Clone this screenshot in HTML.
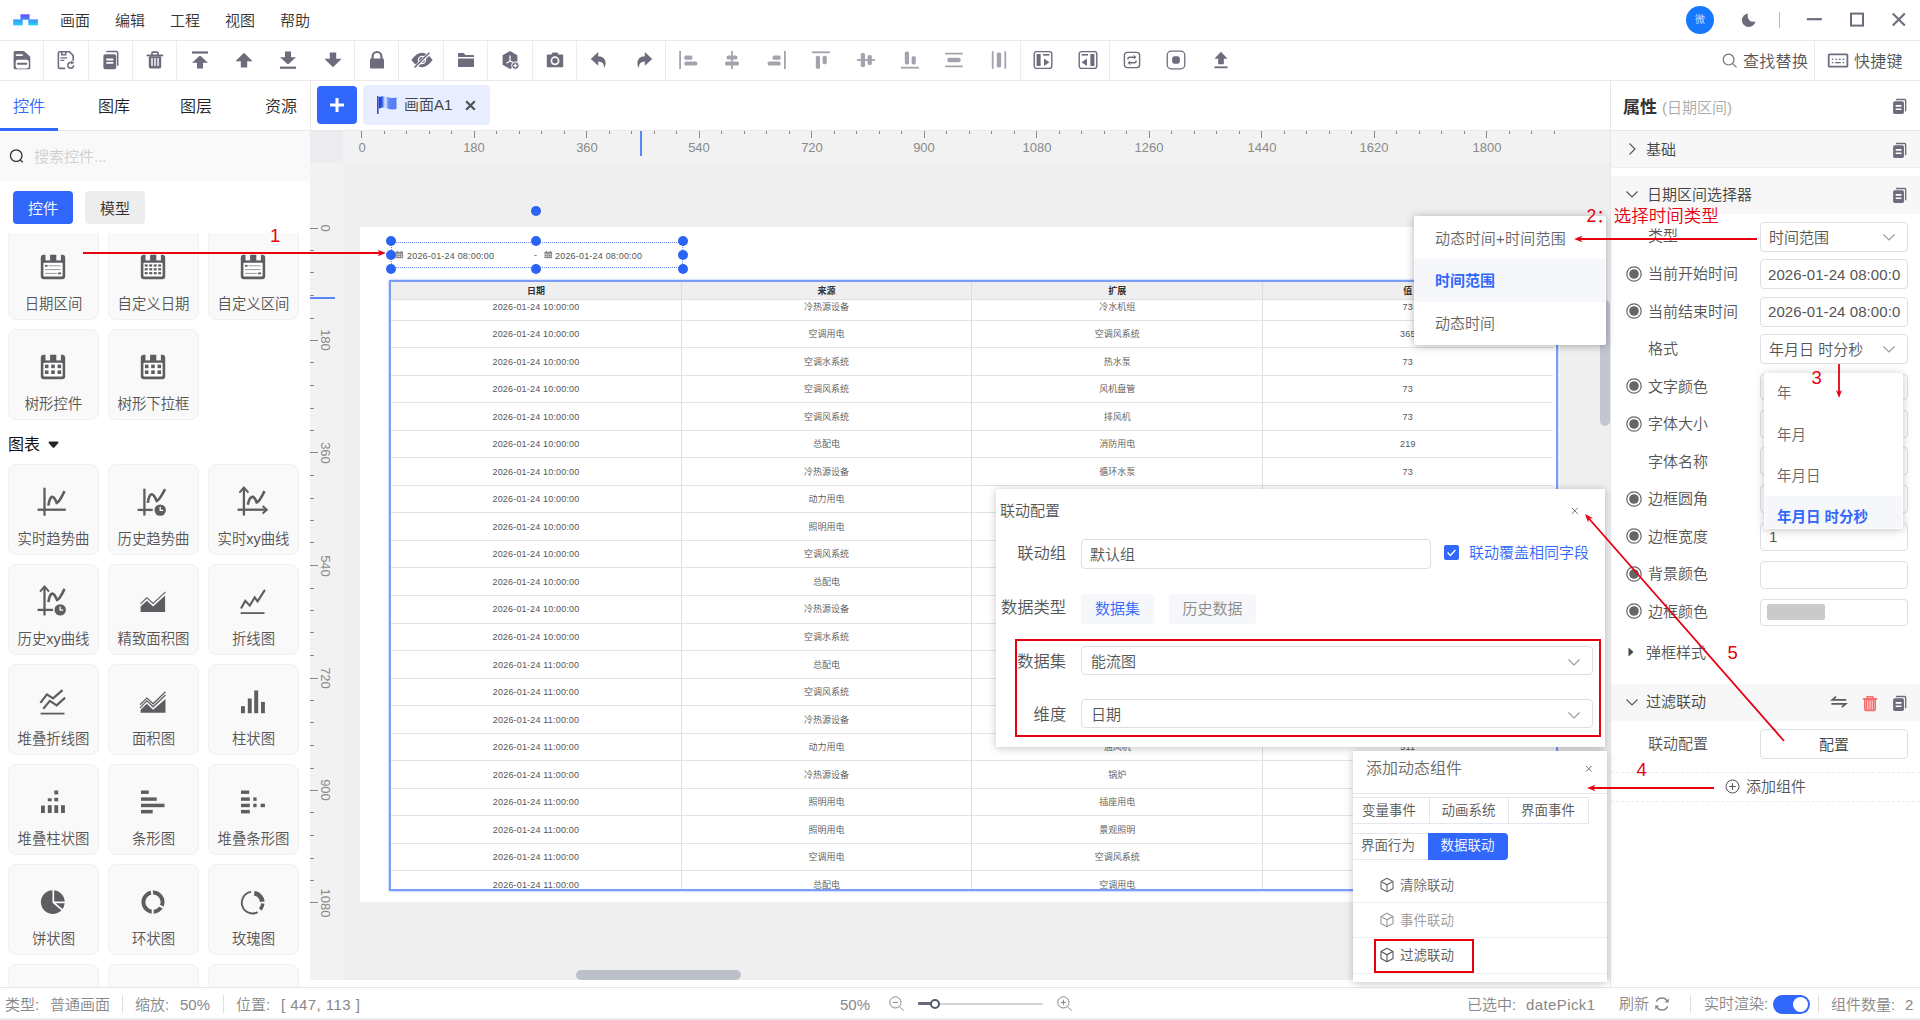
<!DOCTYPE html>
<html lang="zh-CN"><head><meta charset="utf-8"><title>组态编辑器</title>
<style>
html,body{margin:0;padding:0;}
body{width:1920px;height:1020px;overflow:hidden;background:#fff;position:relative;
font-family:"Liberation Sans","Noto Sans CJK SC",sans-serif;font-weight:350;}
div,span.t,span.v,svg{position:absolute;box-sizing:border-box;}
span.t{white-space:nowrap;display:block;}
span.v{white-space:nowrap;display:block;transform-origin:0 0;}
.clip{overflow:hidden;}
.card{background:#f9f9f9;border:1px solid #f0f0f0;border-radius:8px;}
.inp{border:1px solid #dcdfe6;border-radius:4px;background:#fff;}
.sh{box-shadow:0 1px 8px rgba(0,0,0,.24);background:#fff;}
</style></head><body>
<div style="left:0px;top:0px;width:1920px;height:41px;background:#fff;border-bottom:1px solid #e9e9e9;"></div>
<svg style="left:13px;top:14px;" width="25" height="12" viewBox="0 0 25 12"><defs><linearGradient id="lg1" x1="0" y1="0" x2="0" y2="1"><stop offset="0" stop-color="#3d8ffb"/><stop offset="1" stop-color="#22d3fb"/></linearGradient><linearGradient id="lg2" x1="0" y1="0" x2="0" y2="1"><stop offset="0" stop-color="#6a4cff"/><stop offset="1" stop-color="#3d8ffb"/></linearGradient></defs><rect x=".2" y="5.400" width="9.500" height="6" fill="url(#lg1)"/><rect x="15.300" y="5.400" width="9.600" height="6" fill="url(#lg1)"/><rect x="7.400" y=".3" width="9.200" height="5.500" fill="url(#lg2)"/></svg>
<span class="t" style="left:60px;top:9.5px;font-size:15px;line-height:21px;color:#333;">画面</span>
<span class="t" style="left:115px;top:9.5px;font-size:15px;line-height:21px;color:#333;">编辑</span>
<span class="t" style="left:170px;top:9.5px;font-size:15px;line-height:21px;color:#333;">工程</span>
<span class="t" style="left:225px;top:9.5px;font-size:15px;line-height:21px;color:#333;">视图</span>
<span class="t" style="left:280px;top:9.5px;font-size:15px;line-height:21px;color:#333;">帮助</span>
<div style="left:1686px;top:6px;width:28px;height:28px;background:#1677ff;border-radius:50%;"></div>
<span class="t" style="left:1686.0px;top:12.0px;width:28px;text-align:center;font-size:10px;line-height:16px;color:#fff;font-weight:300;">微</span>
<svg style="left:1739px;top:11px;" width="18" height="18" viewBox="0 0 18 18"><circle cx="9.700" cy="9.300" r="6.800" fill="#6c6c7c"/><circle cx="14.300" cy="5.100" r="5.700" fill="#fff"/></svg>
<div style="left:1779px;top:12px;width:1px;height:16px;background:#bbb;"></div>
<svg style="left:1805px;top:9px;" width="20" height="20" viewBox="0 0 20 20"><path d="M1.800 10.200h15" stroke="#6c6c7c" stroke-width="2.200"/></svg>
<svg style="left:1847px;top:10px;" width="20" height="20" viewBox="0 0 20 20"><rect x="4" y="3.600" width="12" height="12" fill="none" stroke="#6c6c7c" stroke-width="2"/></svg>
<svg style="left:1889px;top:10px;" width="20" height="20" viewBox="0 0 20 20"><path d="M3.800 3.500l12 12M15.800 3.500L3.800 15.500" stroke="#6c6c7c" stroke-width="2"/></svg>
<div style="left:0px;top:41px;width:1920px;height:40px;background:#fff;border-bottom:1px solid #e9e9e9;"></div>
<div style="left:43px;top:41px;width:1px;height:39px;background:#ececec;"></div>
<div style="left:88px;top:41px;width:1px;height:39px;background:#ececec;"></div>
<div style="left:132px;top:41px;width:1px;height:39px;background:#ececec;"></div>
<div style="left:176px;top:41px;width:1px;height:39px;background:#ececec;"></div>
<div style="left:354px;top:41px;width:1px;height:39px;background:#ececec;"></div>
<div style="left:398px;top:41px;width:1px;height:39px;background:#ececec;"></div>
<div style="left:443px;top:41px;width:1px;height:39px;background:#ececec;"></div>
<div style="left:487px;top:41px;width:1px;height:39px;background:#ececec;"></div>
<div style="left:532px;top:41px;width:1px;height:39px;background:#ececec;"></div>
<div style="left:576px;top:41px;width:1px;height:39px;background:#ececec;"></div>
<div style="left:665px;top:41px;width:1px;height:39px;background:#ececec;"></div>
<div style="left:1020px;top:41px;width:1px;height:39px;background:#ececec;"></div>
<div style="left:1109px;top:41px;width:1px;height:39px;background:#ececec;"></div>
<svg style="left:12.0px;top:50px;overflow:visible;" width="20" height="20" viewBox="0 0 20 20"><path d="M3.100 .9h8.800l6.400 5.800v11q0 1.500-1.500 1.500H3.100q-1.500 0-1.500-1.500V2.400q0-1.500 1.500-1.500z" fill="#6c6c7c"/><rect x="3.700" y="4.200" width="7.300" height="1.800" rx=".9" fill="#fff"/><rect x="3.700" y="9.700" width="13.100" height="8.700" rx="2.200" fill="#fff"/><rect x="4.900" y="12.700" width="10.400" height="2.100" rx="1" fill="#6c6c7c"/></svg>
<svg style="left:56.4px;top:50px;overflow:visible;" width="20" height="20" viewBox="0 0 20 20"><path d="M9.200 18.400H3.600q-1.200 0-1.200-1.200V2.900q0-1.200 1.200-1.200h9.600l4 3.800v5.300" fill="none" stroke="#6c6c7c" stroke-width="1.600" stroke-linejoin="round"/><path d="M5.700 1.700v3h4V1.700" fill="none" stroke="#6c6c7c" stroke-width="1.500"/><path d="M4.500 7.900h6.600M4.500 10.400h3.700" fill="none" stroke="#6c6c7c" stroke-width="1.300"/><circle cx="14.700" cy="15.300" r="2.900" fill="none" stroke="#6c6c7c" stroke-width="1.500" stroke-dasharray="14.500 3.700"/><path d="M15.200 10.500l3.200 2.300-3.400 1.700z" fill="#6c6c7c"/></svg>
<svg style="left:100.8px;top:50px;overflow:visible;" width="20" height="20" viewBox="0 0 20 20"><path d="M5.800 1.600h9.600q1.300 0 1.300 1.300v12.400" fill="none" stroke="#6c6c7c" stroke-width="1.500" stroke-linecap="round"/><rect x="2.400" y="4.200" width="12.800" height="15" rx="1.800" fill="#6c6c7c"/><path d="M5.300 9.500h7M5.300 12.800h7" stroke="#fff" stroke-width="1.800"/></svg>
<svg style="left:145.2px;top:50px;overflow:visible;" width="20" height="20" viewBox="0 0 20 20"><path d="M2.4 5.4h15.2M7 5V3.2q0-1 1-1h4q1 0 1 1V5" fill="none" stroke="#6c6c7c" stroke-width="1.7" stroke-linecap="round"/><path d="M3.8 6.2h12.4v10.6q0 1.6-1.6 1.6H5.4q-1.6 0-1.6-1.6z" fill="#6c6c7c"/><path d="M7 8v8M10 8v8M13 8v8" stroke="#fff" stroke-width="1.4"/></svg>
<svg style="left:189.6px;top:50px;overflow:visible;" width="20" height="20" viewBox="0 0 20 20"><rect x="2" y="1.4" width="16" height="2.2" fill="#6c6c7c"/><path d="M10 5.4l8 7.4h-5v5.8H7v-5.8H2z" fill="#6c6c7c"/></svg>
<svg style="left:234.0px;top:50px;overflow:visible;" width="20" height="20" viewBox="0 0 20 20"><path d="M10 2.8l8.6 8.4h-5.4v6.4H6.8v-6.4H1.4z" fill="#6c6c7c"/></svg>
<svg style="left:278.4px;top:50px;overflow:visible;" width="20" height="20" viewBox="0 0 20 20"><rect x="2" y="16.6" width="16" height="2.2" fill="#6c6c7c"/><path d="M10 14.6l8-7.4h-5V1.4H7v5.8H2z" fill="#6c6c7c"/></svg>
<svg style="left:322.8px;top:50px;overflow:visible;" width="20" height="20" viewBox="0 0 20 20"><path d="M10 17.2l8.6-8.4h-5.4V2.4H6.8v6.4H1.4z" fill="#6c6c7c"/></svg>
<svg style="left:367.2px;top:50px;overflow:visible;" width="20" height="20" viewBox="0 0 20 20"><path d="M5.6 9V6.4a4.4 4.4 0 0 1 8.8 0V9" fill="none" stroke="#6c6c7c" stroke-width="2.2"/><rect x="3" y="8.6" width="14" height="10" rx="1.2" fill="#6c6c7c"/></svg>
<svg style="left:411.6px;top:50px;overflow:visible;" width="20" height="20" viewBox="0 0 20 20"><path d="M-.6 10Q4.600 2.800 10 2.800T20.600 10Q15.400 17.200 10 17.200T-.6 10z" fill="#6c6c7c"/><circle cx="10" cy="10" r="3.6" fill="none" stroke="#fff" stroke-width="1.2"/><path d="M2.8 17.6L18 2.6" stroke="#fff" stroke-width="3.4"/><path d="M2.6 17.4L17.4 2.8" stroke="#6c6c7c" stroke-width="1.5"/></svg>
<svg style="left:456.0px;top:50px;overflow:visible;" width="20" height="20" viewBox="0 0 20 20"><path d="M2 3.8q0-.8.8-.8h5l1.6 2h7.800q.8 0 .8.800V7H2z" fill="#6c6c7c"/><path d="M2 8.400h16v7.800q0 .8-.8.800H2.800q-.8 0-.800-.800z" fill="#6c6c7c"/></svg>
<svg style="left:500.4px;top:50px;overflow:visible;" width="20" height="20" viewBox="0 0 20 20"><path d="M10 1l7.400 4.200v6.400a5.200 5.200 0 0 0-5 6.200L10 19l-7.400-4.200V5.200z" fill="#6c6c7c"/><path d="M10 5.600v5.400M10 11l-3.600 2.200M10 11l3 1.400" stroke="#fff" stroke-width="1.200" fill="none"/><circle cx="15.400" cy="15.600" r="3.800" fill="#6c6c7c" stroke="#fff" stroke-width="1"/><path d="M13.400 15.600h4M15.400 13.600v4" stroke="#fff" stroke-width="1.300"/></svg>
<svg style="left:544.8px;top:50px;overflow:visible;" width="20" height="20" viewBox="0 0 20 20"><path d="M6.400 4.600L7.600 2.600h4.800l1.200 2h3.600q1 0 1 1v10.600q0 1-1 1H2.800q-1 0-1-1V5.600q0-1 1-1z" fill="#6c6c7c"/><circle cx="10" cy="10.800" r="3.600" fill="none" stroke="#fff" stroke-width="1.700"/></svg>
<svg style="left:589.2px;top:50px;overflow:visible;" width="20" height="20" viewBox="0 0 20 20"><path d="M9.200 2v4.200q7.600.4 7.400 7.600-.1 2.400-1.600 4.200.6-6-5.800-6.400v4.200L1.800 9z" fill="#6c6c7c"/></svg>
<svg style="left:633.6px;top:50px;overflow:visible;" width="20" height="20" viewBox="0 0 20 20"><path d="M10.800 2v4.200q-7.600.4-7.400 7.600.1 2.400 1.600 4.200-.6-6 5.800-6.400v4.200L18.200 9z" fill="#6c6c7c"/></svg>
<svg style="left:678.0px;top:50px;overflow:visible;" width="20" height="20" viewBox="0 0 20 20"><rect x="1.2" y="1" width="1.8" height="18" rx="0" fill="#a3a3ad"/><rect x="6.4" y="5.6" width="8" height="4.2" rx="1.6" fill="#a3a3ad"/><rect x="6.4" y="11.4" width="13" height="4.2" rx="1.6" fill="#a3a3ad"/></svg>
<svg style="left:722.4px;top:50px;overflow:visible;" width="20" height="20" viewBox="0 0 20 20"><rect x="9.1" y="1" width="1.8" height="18" rx="0" fill="#a3a3ad"/><rect x="4.6" y="5.4" width="10.8" height="4.2" rx="1.6" fill="#a3a3ad"/><rect x="3" y="11.4" width="14" height="4.2" rx="1.6" fill="#a3a3ad"/></svg>
<svg style="left:766.8px;top:50px;overflow:visible;" width="20" height="20" viewBox="0 0 20 20"><rect x="17" y="1" width="1.8" height="18" rx="0" fill="#a3a3ad"/><rect x="5.6" y="5.6" width="8" height="4.2" rx="1.6" fill="#a3a3ad"/><rect x="0.6" y="11.4" width="13" height="4.2" rx="1.6" fill="#a3a3ad"/></svg>
<svg style="left:811.2px;top:50px;overflow:visible;" width="20" height="20" viewBox="0 0 20 20"><rect x="1" y="1.4" width="18" height="1.8" rx="0" fill="#a3a3ad"/><rect x="4.8" y="5.8" width="4.2" height="13" rx="1.6" fill="#a3a3ad"/><rect x="11.6" y="5.8" width="4.2" height="8.4" rx="1.6" fill="#a3a3ad"/></svg>
<svg style="left:855.6px;top:50px;overflow:visible;" width="20" height="20" viewBox="0 0 20 20"><rect x="1" y="9.1" width="18" height="1.8" rx="0" fill="#a3a3ad"/><rect x="4.8" y="3" width="4.2" height="14" rx="1.6" fill="#a3a3ad"/><rect x="11.6" y="5" width="4.2" height="10" rx="1.6" fill="#a3a3ad"/></svg>
<svg style="left:900.0px;top:50px;overflow:visible;" width="20" height="20" viewBox="0 0 20 20"><rect x="1" y="16.8" width="18" height="1.8" rx="0" fill="#a3a3ad"/><rect x="4.8" y="1.4" width="4.2" height="13" rx="1.6" fill="#a3a3ad"/><rect x="11.6" y="6.2" width="4.2" height="8.2" rx="1.6" fill="#a3a3ad"/></svg>
<svg style="left:944.4px;top:50px;overflow:visible;" width="20" height="20" viewBox="0 0 20 20"><rect x="1" y="2.8" width="18" height="1.8" rx="0.9" fill="#a3a3ad"/><rect x="1" y="15.4" width="18" height="1.8" rx="0.9" fill="#a3a3ad"/><rect x="3.4" y="7.8" width="13.2" height="4.4" rx="1.6" fill="#a3a3ad"/></svg>
<svg style="left:988.8px;top:50px;overflow:visible;" width="20" height="20" viewBox="0 0 20 20"><rect x="2.8" y="1" width="1.8" height="18" rx="0.9" fill="#a3a3ad"/><rect x="15.4" y="1" width="1.8" height="18" rx="0.9" fill="#a3a3ad"/><rect x="7.8" y="2.6" width="4.4" height="14.8" rx="1.6" fill="#a3a3ad"/></svg>
<svg style="left:1033.2px;top:50px;overflow:visible;" width="20" height="20" viewBox="0 0 20 20"><rect x="1.200" y="1.600" width="17.600" height="16.800" rx="2.400" fill="#fff" stroke="#6c6c7c" stroke-width="1.400"/><rect x="3.600" y="4" width="4" height="12" fill="#6c6c7c"/><rect x="10" y="4" width="6.400" height="1.600" fill="#6c6c7c"/><path d="M11 8.400l5.400 3.800L11 16z" fill="#6c6c7c"/></svg>
<svg style="left:1077.6px;top:50px;overflow:visible;" width="20" height="20" viewBox="0 0 20 20"><rect x="1.200" y="1.600" width="17.600" height="16.800" rx="2.400" fill="#fff" stroke="#6c6c7c" stroke-width="1.400"/><rect x="12.400" y="4" width="4" height="12" fill="#6c6c7c"/><rect x="3.600" y="4" width="6.400" height="1.600" fill="#6c6c7c"/><path d="M9 8.400L3.600 12.200 9 16z" fill="#6c6c7c"/></svg>
<svg style="left:1122.0px;top:50px;overflow:visible;" width="20" height="20" viewBox="0 0 20 20"><rect x="2.400" y="2.400" width="15.200" height="15.200" rx="2.800" fill="#fff" stroke="#6c6c7c" stroke-width="1.400"/><path d="M6 9.400V8.600q0-1.400 1.400-1.400h5.400M14 10.600v.8q0 1.400-1.400 1.400H7.200" fill="none" stroke="#6c6c7c" stroke-width="1.500"/><path d="M11.800 4.800l2.600 2.400-2.600 2.200zM8.200 10.600l-2.600 2.200 2.600 2.400z" fill="#6c6c7c"/></svg>
<svg style="left:1166.4px;top:50px;overflow:visible;" width="20" height="20" viewBox="0 0 20 20"><rect x="1.200" y="1.200" width="17.600" height="17.600" rx="4" fill="#fff" stroke="#6c6c7c" stroke-width="1.300"/><rect x="6.200" y="6.200" width="7.600" height="7.600" rx="2.200" fill="#6c6c7c"/></svg>
<svg style="left:1210.8px;top:50px;overflow:visible;" width="20" height="20" viewBox="0 0 20 20"><path d="M10 1.800l6.600 7h-3.800v5.400H7.200V8.800H3.400z" fill="#6c6c7c"/><rect x="3.400" y="16.400" width="13.200" height="1.800" fill="#6c6c7c"/></svg>
<div style="left:1814px;top:41px;width:1px;height:39px;background:#ececec;"></div>
<svg style="left:1721px;top:53px;" width="17" height="16" viewBox="0 0 17 16"><circle cx="7.600" cy="6.600" r="5.400" fill="none" stroke="#707070" stroke-width="1.200"/><path d="M11.600 10.600l4 3.800" stroke="#707070" stroke-width="1.200"/></svg>
<span class="t" style="left:1743px;top:50.6px;font-size:16px;line-height:22px;color:#555;letter-spacing:.3px;">查找替换</span>
<svg style="left:1827px;top:53px;" width="22" height="16" viewBox="0 0 22 16"><rect x="1.700" y="1.300" width="18.700" height="12.400" rx=".8" fill="none" stroke="#6c6c7c" stroke-width="1.800"/><path d="M4.800 6.400h1.600M8.400 6.400h1.600M12 6.400h1.600M15.600 6.400h1.600M4.800 9.600h1.600M15.600 9.600h1.600M8.200 9.600h5.600" stroke="#6c6c7c" stroke-width="1.400"/></svg>
<span class="t" style="left:1854px;top:50.6px;font-size:16px;line-height:22px;color:#555;letter-spacing:.2px;">快捷键</span>
<div style="left:0px;top:81px;width:311px;height:907px;background:#fff;border-right:1px solid #e9e9e9;"></div>
<div style="left:0px;top:130px;width:310px;height:1px;background:#e9e9e9;"></div>
<span class="t" style="left:13px;top:96.0px;font-size:16px;line-height:22px;color:#3167fb;">控件</span>
<span class="t" style="left:98px;top:96.0px;font-size:16px;line-height:22px;color:#222;">图库</span>
<span class="t" style="left:180px;top:96.0px;font-size:16px;line-height:22px;color:#222;">图层</span>
<span class="t" style="left:265px;top:96.0px;font-size:16px;line-height:22px;color:#222;">资源</span>
<div style="left:0px;top:128px;width:58px;height:3px;background:#3167fb;"></div>
<div style="left:0px;top:131px;width:310px;height:50px;background:#f9f9f9;"></div>
<svg style="left:9px;top:148px;" width="16" height="16" viewBox="0 0 16 16"><circle cx="7.200" cy="7.600" r="5.800" fill="none" stroke="#333" stroke-width="1.300"/><path d="M11.400 12l2.400 2.400" stroke="#333" stroke-width="1.300"/></svg>
<span class="t" style="left:34px;top:145.5px;font-size:15px;line-height:21px;color:#cfcfcf;">搜索控件...</span>
<div style="left:13px;top:191px;width:60px;height:33px;background:#3167fb;border-radius:4px;"></div>
<span class="t" style="left:13.0px;top:197.5px;width:60px;text-align:center;font-size:15px;line-height:21px;color:#fff;">控件</span>
<div style="left:85px;top:191px;width:60px;height:33px;background:#ededed;border-radius:4px;"></div>
<span class="t" style="left:85.0px;top:197.5px;width:60px;text-align:center;font-size:15px;line-height:21px;color:#333;">模型</span>
<div class="clip" style="left:0;top:233px;width:310px;height:754px;">
<div class="card" style="left:8.3px;top:-3.7px;width:90.4px;height:90.4px;"></div>
<svg style="left:38.2px;top:18.9px;overflow:visible;" width="30" height="30" viewBox="0 0 30 30"><rect x="2.800" y="2.800" width="24.400" height="24.400" rx="3" fill="#5e5e62"/><rect x="5.400" y="10.800" width="19.200" height="13.800" rx="1" fill="#fff"/><rect x="7.500" y="2" width="4.600" height="6.400" fill="#f9f9f9"/><rect x="18.300" y="2" width="4.600" height="6.400" fill="#f9f9f9"/><rect x="7" y="12.900" width="2.600" height="1.800" fill="#5e5e62"/><rect x="10.600" y="13.300" width="12" height="1" fill="#999"/><rect x="7" y="17.100" width="15.600" height="1" fill="#999"/><rect x="7" y="20.900" width="12" height="1" fill="#999"/><rect x="20" y="20.500" width="3" height="1.800" fill="#5e5e62"/></svg>
<span class="t" style="left:8.0px;top:60.8px;width:91px;text-align:center;font-size:14.4px;line-height:20.4px;color:#555;">日期区间</span>
<div class="card" style="left:108.3px;top:-3.7px;width:90.4px;height:90.4px;"></div>
<svg style="left:138.2px;top:18.9px;overflow:visible;" width="30" height="30" viewBox="0 0 30 30"><rect x="2.800" y="2.800" width="24.400" height="24.400" rx="3" fill="#5e5e62"/><rect x="5.400" y="10.800" width="19.200" height="13.800" rx="1" fill="#fff"/><rect x="7.500" y="2" width="4.600" height="6.400" fill="#f9f9f9"/><rect x="18.300" y="2" width="4.600" height="6.400" fill="#f9f9f9"/><rect x="6.7" y="12.4" width="3" height="2.200" fill="#5e5e62"/><rect x="11.2" y="12.4" width="3" height="2.200" fill="#5e5e62"/><rect x="15.7" y="12.4" width="3" height="2.200" fill="#5e5e62"/><rect x="20.2" y="12.4" width="3" height="2.200" fill="#5e5e62"/><rect x="6.7" y="16.2" width="3" height="2.200" fill="#5e5e62"/><rect x="11.2" y="16.2" width="3" height="2.200" fill="#5e5e62"/><rect x="15.7" y="16.2" width="3" height="2.200" fill="#5e5e62"/><rect x="20.2" y="16.2" width="3" height="2.200" fill="#5e5e62"/><rect x="6.7" y="20.1" width="3" height="2.200" fill="#5e5e62"/><rect x="11.2" y="20.1" width="3" height="2.200" fill="#5e5e62"/><rect x="15.7" y="20.1" width="3" height="2.200" fill="#5e5e62"/><rect x="20.2" y="20.1" width="3" height="2.200" fill="#5e5e62"/></svg>
<span class="t" style="left:108.0px;top:60.8px;width:91px;text-align:center;font-size:14.4px;line-height:20.4px;color:#555;">自定义日期</span>
<div class="card" style="left:208.3px;top:-3.7px;width:90.4px;height:90.4px;"></div>
<svg style="left:238.2px;top:18.9px;overflow:visible;" width="30" height="30" viewBox="0 0 30 30"><rect x="2.800" y="2.800" width="24.400" height="24.400" rx="3" fill="#5e5e62"/><rect x="5.400" y="10.800" width="19.200" height="13.800" rx="1" fill="#fff"/><rect x="7.500" y="2" width="4.600" height="6.400" fill="#f9f9f9"/><rect x="18.300" y="2" width="4.600" height="6.400" fill="#f9f9f9"/><rect x="7" y="12.900" width="2.600" height="1.800" fill="#5e5e62"/><rect x="10.600" y="13.300" width="12" height="1" fill="#999"/><rect x="7" y="17.100" width="15.600" height="1" fill="#999"/><rect x="7" y="20.900" width="12" height="1" fill="#999"/><rect x="20" y="20.500" width="3" height="1.800" fill="#5e5e62"/></svg>
<span class="t" style="left:208.0px;top:60.8px;width:91px;text-align:center;font-size:14.4px;line-height:20.4px;color:#555;">自定义区间</span>
<div class="card" style="left:8.3px;top:96.3px;width:90.4px;height:90.4px;"></div>
<svg style="left:38.2px;top:118.9px;overflow:visible;" width="30" height="30" viewBox="0 0 30 30"><rect x="2.800" y="2.800" width="24.400" height="24.400" rx="3" fill="#5e5e62"/><rect x="5.400" y="10.800" width="19.200" height="13.800" rx="1" fill="#fff"/><rect x="7.500" y="2" width="4.600" height="6.400" fill="#f9f9f9"/><rect x="18.300" y="2" width="4.600" height="6.400" fill="#f9f9f9"/><rect x="6.9" y="12.6" width="3.600" height="3.600" fill="#5e5e62"/><rect x="13.2" y="12.6" width="3.600" height="3.600" fill="#5e5e62"/><rect x="19.5" y="12.6" width="3.600" height="3.600" fill="#5e5e62"/><rect x="6.9" y="18.4" width="3.600" height="3.600" fill="#5e5e62"/><rect x="13.2" y="18.4" width="3.600" height="3.600" fill="#5e5e62"/><rect x="19.5" y="18.4" width="3.600" height="3.600" fill="#5e5e62"/></svg>
<span class="t" style="left:8.0px;top:160.8px;width:91px;text-align:center;font-size:14.4px;line-height:20.4px;color:#555;">树形控件</span>
<div class="card" style="left:108.3px;top:96.3px;width:90.4px;height:90.4px;"></div>
<svg style="left:138.2px;top:118.9px;overflow:visible;" width="30" height="30" viewBox="0 0 30 30"><rect x="2.800" y="2.800" width="24.400" height="24.400" rx="3" fill="#5e5e62"/><rect x="5.400" y="10.800" width="19.200" height="13.800" rx="1" fill="#fff"/><rect x="7.500" y="2" width="4.600" height="6.400" fill="#f9f9f9"/><rect x="18.300" y="2" width="4.600" height="6.400" fill="#f9f9f9"/><rect x="6.9" y="12.6" width="3.600" height="3.600" fill="#5e5e62"/><rect x="13.2" y="12.6" width="3.600" height="3.600" fill="#5e5e62"/><rect x="19.5" y="12.6" width="3.600" height="3.600" fill="#5e5e62"/><rect x="6.9" y="18.4" width="3.600" height="3.600" fill="#5e5e62"/><rect x="13.2" y="18.4" width="3.600" height="3.600" fill="#5e5e62"/><rect x="19.5" y="18.4" width="3.600" height="3.600" fill="#5e5e62"/></svg>
<span class="t" style="left:108.0px;top:160.8px;width:91px;text-align:center;font-size:14.4px;line-height:20.4px;color:#555;">树形下拉框</span>
<span class="t" style="left:8px;top:201.0px;font-size:16px;line-height:22px;color:#111;font-weight:400;">图表</span>
<svg style="left:46.5px;top:206.5px;" width="13" height="10" viewBox="0 0 13 10"><path d="M1.500 2.800q0-1.300 1.500-1.300h7q1.500 0 1.500 1.300L7.400 7.400q-.9 .9-1.800 0z" fill="#222"/></svg>
<div class="card" style="left:8.3px;top:231.3px;width:90.4px;height:90.4px;"></div>
<svg style="left:38.2px;top:253.9px;overflow:visible;" width="30" height="30" viewBox="0 0 30 30"><path d="M6.5 0.7L6.5 28.7" stroke="#5e5e62" stroke-width="2.3" fill="none" stroke-linejoin="round" stroke-linecap="butt"/><path d="M-0.4 22.7L27.8 22.7" stroke="#5e5e62" stroke-width="2.3" fill="none" stroke-linejoin="round" stroke-linecap="butt"/><path d="M10.4 18.6Q11.500000000000002 11 13.8 10T18.7 15.9Q21.2 15.4 26.5 4.1" stroke="#5e5e62" stroke-width="2.600" fill="none"/></svg>
<span class="t" style="left:8.0px;top:295.8px;width:91px;text-align:center;font-size:14.4px;line-height:20.4px;color:#555;">实时趋势曲</span>
<div class="card" style="left:108.3px;top:231.3px;width:90.4px;height:90.4px;"></div>
<svg style="left:138.2px;top:253.9px;overflow:visible;" width="30" height="30" viewBox="0 0 30 30"><path d="M6.4 1.7L6.4 28.6" stroke="#5e5e62" stroke-width="2.3" fill="none" stroke-linejoin="round" stroke-linecap="butt"/><path d="M-0.4 22.9L14.7 22.9" stroke="#5e5e62" stroke-width="2.3" fill="none" stroke-linejoin="round" stroke-linecap="butt"/><path d="M9.8 15.9Q10.9 8.4 13.2 7.4T18.7 13.9Q21.2 13.4 27.1 2.1" stroke="#5e5e62" stroke-width="2.600" fill="none"/><circle cx="22.2" cy="23.1" r="6.700" fill="#f9f9f9"/><circle cx="22.2" cy="23.1" r="5.700" fill="#5e5e62"/><path d="M22.2 19.700000000000003V23.400000000000002H25.2" stroke="#fff" stroke-width="1.300" fill="none"/></svg>
<span class="t" style="left:108.0px;top:295.8px;width:91px;text-align:center;font-size:14.4px;line-height:20.4px;color:#555;">历史趋势曲</span>
<div class="card" style="left:208.3px;top:231.3px;width:90.4px;height:90.4px;"></div>
<svg style="left:238.2px;top:253.9px;overflow:visible;" width="30" height="30" viewBox="0 0 30 30"><path d="M5.9 0.8L5.9 28.6" stroke="#5e5e62" stroke-width="2.3" fill="none" stroke-linejoin="round" stroke-linecap="butt"/><path d="M-0.4 22.7L27.8 22.7" stroke="#5e5e62" stroke-width="2.3" fill="none" stroke-linejoin="round" stroke-linecap="butt"/><path d="M1.4000000000000004 5.6L5.9 0.6l4.500 5" stroke="#5e5e62" stroke-width="2" fill="none"/><path d="M24.600 19l4.200 3.700-4.200 3.700" stroke="#5e5e62" stroke-width="2" fill="none"/><path d="M9.8 17.8Q11.200000000000001 11 13.8 10T18.7 15.5Q21.2 15.0 26.5 4.1" stroke="#5e5e62" stroke-width="2.600" fill="none"/></svg>
<span class="t" style="left:208.0px;top:295.8px;width:91px;text-align:center;font-size:14.4px;line-height:20.4px;color:#555;">实时xy曲线</span>
<div class="card" style="left:8.3px;top:331.3px;width:90.4px;height:90.4px;"></div>
<svg style="left:38.2px;top:353.9px;overflow:visible;" width="30" height="30" viewBox="0 0 30 30"><path d="M6.5 0L6.5 28.4" stroke="#5e5e62" stroke-width="2.3" fill="none" stroke-linejoin="round" stroke-linecap="butt"/><path d="M-0.4 22.9L15 22.9" stroke="#5e5e62" stroke-width="2.3" fill="none" stroke-linejoin="round" stroke-linecap="butt"/><path d="M2.0 4.6L6.5 -0.4l4.500 5" stroke="#5e5e62" stroke-width="2" fill="none"/><path d="M10.4 15.1Q11.500000000000002 7.8 13.8 6.8T19.1 13.1Q21.6 12.6 26.5 1.9" stroke="#5e5e62" stroke-width="2.600" fill="none"/><circle cx="22.2" cy="22.9" r="6.700" fill="#f9f9f9"/><circle cx="22.2" cy="22.9" r="5.700" fill="#5e5e62"/><path d="M22.2 19.5V23.2H25.2" stroke="#fff" stroke-width="1.300" fill="none"/></svg>
<span class="t" style="left:8.0px;top:395.8px;width:91px;text-align:center;font-size:14.4px;line-height:20.4px;color:#555;">历史xy曲线</span>
<div class="card" style="left:108.3px;top:331.3px;width:90.4px;height:90.4px;"></div>
<svg style="left:138.2px;top:353.9px;overflow:visible;" width="30" height="30" viewBox="0 0 30 30"><path d="M2.600 19.600L8.900 13.700 15.100 19.600 27.100 8.400V24.900H2.600z" fill="#5e5e62"/><path d="M2.4 16.8L8.9 10.8L15.1 16.4L27.5 4.9" stroke="#5e5e62" stroke-width="1.1" fill="none" /></svg>
<span class="t" style="left:108.0px;top:395.8px;width:91px;text-align:center;font-size:14.4px;line-height:20.4px;color:#555;">精致面积图</span>
<div class="card" style="left:208.3px;top:331.3px;width:90.4px;height:90.4px;"></div>
<svg style="left:238.2px;top:353.9px;overflow:visible;" width="30" height="30" viewBox="0 0 30 30"><path d="M3 21.5L7.3 13.7L11.8 18.6L16.7 10.4L19.6 14.3L26.9 2.9" stroke="#5e5e62" stroke-width="2.1" fill="none" /><path d="M2.6 26.1L26.5 26.1" stroke="#5e5e62" stroke-width="1.8" fill="none" stroke-linejoin="round" stroke-linecap="butt"/></svg>
<span class="t" style="left:208.0px;top:395.8px;width:91px;text-align:center;font-size:14.4px;line-height:20.4px;color:#555;">折线图</span>
<div class="card" style="left:8.3px;top:431.3px;width:90.4px;height:90.4px;"></div>
<svg style="left:38.2px;top:453.9px;overflow:visible;" width="30" height="30" viewBox="0 0 30 30"><path d="M2.4 15.9L8.9 7.4L15.1 11.4L24.5 3.1" stroke="#5e5e62" stroke-width="2.2" fill="none" /><path d="M5.3 21.7L11.8 13.9L18.7 18.4L27.1 10.6" stroke="#5e5e62" stroke-width="2.2" fill="none" /><path d="M2.6 26.6L26.5 26.6" stroke="#5e5e62" stroke-width="1.8" fill="none" stroke-linejoin="round" stroke-linecap="butt"/></svg>
<span class="t" style="left:8.0px;top:495.8px;width:91px;text-align:center;font-size:14.4px;line-height:20.4px;color:#555;">堆叠折线图</span>
<div class="card" style="left:108.3px;top:431.3px;width:90.4px;height:90.4px;"></div>
<svg style="left:138.2px;top:453.9px;overflow:visible;" width="30" height="30" viewBox="0 0 30 30"><path d="M2.600 25.700V22.700L8.900 16.800 15.100 22.700 27.500 11.900V25.700z" fill="#5e5e62"/><path d="M2 20.8L8.9 13.9L15.1 19.8L27.5 8" stroke="#5e5e62" stroke-width="1.2" fill="none" /><path d="M2 17.8L8.9 11L15.1 16.8L27.5 4.7" stroke="#5e5e62" stroke-width="1.2" fill="none" /></svg>
<span class="t" style="left:108.0px;top:495.8px;width:91px;text-align:center;font-size:14.4px;line-height:20.4px;color:#555;">面积图</span>
<div class="card" style="left:208.3px;top:431.3px;width:90.4px;height:90.4px;"></div>
<svg style="left:238.2px;top:453.9px;overflow:visible;" width="30" height="30" viewBox="0 0 30 30"><rect x="3" y="19.2" width="3.9" height="7" fill="#5e5e62"/><rect x="9.8" y="11.5" width="3.9" height="14.7" fill="#5e5e62"/><rect x="16.2" y="3.5" width="4" height="22.7" fill="#5e5e62"/><rect x="23" y="14.9" width="3.9" height="11.3" fill="#5e5e62"/></svg>
<span class="t" style="left:208.0px;top:495.8px;width:91px;text-align:center;font-size:14.4px;line-height:20.4px;color:#555;">柱状图</span>
<div class="card" style="left:8.3px;top:531.3px;width:90.4px;height:90.4px;"></div>
<svg style="left:38.2px;top:553.9px;overflow:visible;" width="30" height="30" viewBox="0 0 30 30"><rect x="3" y="18.6" width="3.9" height="7.4" fill="#5e5e62"/><rect x="9.8" y="18.2" width="3.9" height="7.8" fill="#5e5e62"/><rect x="9.8" y="11.3" width="3.9" height="3" fill="#5e5e62"/><rect x="16.3" y="18.2" width="3.9" height="7.8" fill="#5e5e62"/><rect x="16.3" y="10.8" width="3.9" height="3.5" fill="#5e5e62"/><rect x="16.3" y="3.5" width="3.9" height="3.9" fill="#5e5e62"/><rect x="23" y="18.2" width="3.9" height="7.8" fill="#5e5e62"/></svg>
<span class="t" style="left:8.0px;top:595.8px;width:91px;text-align:center;font-size:14.4px;line-height:20.4px;color:#555;">堆叠柱状图</span>
<div class="card" style="left:108.3px;top:531.3px;width:90.4px;height:90.4px;"></div>
<svg style="left:138.2px;top:553.9px;overflow:visible;" width="30" height="30" viewBox="0 0 30 30"><rect x="3" y="3.5" width="7.8" height="3.4" fill="#5e5e62"/><rect x="3" y="10.4" width="15.7" height="3.4" fill="#5e5e62"/><rect x="3" y="16.7" width="23.5" height="3.5" fill="#5e5e62"/><rect x="3" y="22.9" width="11.7" height="3.5" fill="#5e5e62"/></svg>
<span class="t" style="left:108.0px;top:595.8px;width:91px;text-align:center;font-size:14.4px;line-height:20.4px;color:#555;">条形图</span>
<div class="card" style="left:208.3px;top:531.3px;width:90.4px;height:90.4px;"></div>
<svg style="left:238.2px;top:553.9px;overflow:visible;" width="30" height="30" viewBox="0 0 30 30"><rect x="3" y="3.5" width="8.2" height="3.4" fill="#5e5e62"/><rect x="3" y="10.4" width="8.8" height="3.4" fill="#5e5e62"/><rect x="15.3" y="10.4" width="3.3" height="3.4" fill="#5e5e62"/><rect x="3" y="16.7" width="8.8" height="3.5" fill="#5e5e62"/><rect x="15.3" y="16.7" width="3.3" height="3.5" fill="#5e5e62"/><rect x="22.6" y="16.7" width="4.3" height="3.5" fill="#5e5e62"/><rect x="3" y="22.9" width="8.8" height="3.5" fill="#5e5e62"/></svg>
<span class="t" style="left:208.0px;top:595.8px;width:91px;text-align:center;font-size:14.4px;line-height:20.4px;color:#555;">堆叠条形图</span>
<div class="card" style="left:8.3px;top:631.3px;width:90.4px;height:90.4px;"></div>
<svg style="left:38.2px;top:653.9px;overflow:visible;" width="30" height="30" viewBox="0 0 30 30"><circle cx="14.800" cy="15.100" r="11.900" fill="#5e5e62"/><path d="M15.300 15.400V2M15.300 15.400H28M15.300 15.400L25.500 24" stroke="#f9f9f9" stroke-width="1.700" fill="none"/></svg>
<span class="t" style="left:8.0px;top:695.8px;width:91px;text-align:center;font-size:14.4px;line-height:20.4px;color:#555;">饼状图</span>
<div class="card" style="left:108.3px;top:631.3px;width:90.4px;height:90.4px;"></div>
<svg style="left:138.2px;top:653.9px;overflow:visible;" width="30" height="30" viewBox="0 0 30 30"><circle cx="15" cy="15.100" r="9.600" fill="none" stroke="#5e5e62" stroke-width="3.900"/><path d="M15 15.100L13.600 2M15 15.100L14.600 28M15 15.100L27 21.600" stroke="#f9f9f9" stroke-width="2" fill="none"/></svg>
<span class="t" style="left:108.0px;top:695.8px;width:91px;text-align:center;font-size:14.4px;line-height:20.4px;color:#555;">环状图</span>
<div class="card" style="left:208.3px;top:631.3px;width:90.4px;height:90.4px;"></div>
<svg style="left:238.2px;top:653.9px;overflow:visible;" width="30" height="30" viewBox="0 0 30 30"><path d="M19.67 25.14A10.8 10.8 0 1 1 13.10 4.91" stroke="#5e5e62" stroke-width="1.9" fill="none"/><path d="M16.28 6.05A9.7 9.7 0 0 1 24.26 14.75" stroke="#5e5e62" stroke-width="4.8" fill="none"/><path d="M24.86 16.50A10.3 10.3 0 0 1 22.25 22.49" stroke="#5e5e62" stroke-width="3.4" fill="none"/></svg>
<span class="t" style="left:208.0px;top:695.8px;width:91px;text-align:center;font-size:14.4px;line-height:20.4px;color:#555;">玫瑰图</span>
<div class="card" style="left:8px;top:731px;width:91px;height:91px;"></div>
<div class="card" style="left:108px;top:731px;width:91px;height:91px;"></div>
<div class="card" style="left:208px;top:731px;width:91px;height:91px;"></div>
</div>
<div style="left:311px;top:81px;width:1300px;height:50px;background:#fff;border-bottom:1px solid #e9e9e9;"></div>
<div style="left:317px;top:86px;width:40px;height:38px;background:#3167fb;border-radius:4px;"></div>
<svg style="left:327px;top:95px;" width="20" height="20" viewBox="0 0 20 20"><path d="M10 3v14M3 10h14" stroke="#fff" stroke-width="3"/></svg>
<div style="left:363px;top:85px;width:127px;height:40px;background:#e8eeff;border-radius:4px;"></div>
<svg style="left:376px;top:95px;" width="22" height="20" viewBox="0 0 22 20"><defs><linearGradient id="fl" x1="0" y1="0" x2="1" y2="0"><stop offset="0" stop-color="#1238c8"/><stop offset=".18" stop-color="#2f5ce8"/><stop offset=".36" stop-color="#e4ebff"/><stop offset=".56" stop-color="#5f86f6"/><stop offset="1" stop-color="#4f7af4"/></linearGradient></defs><path d="M1.800 1v18" stroke="#3553c8" stroke-width="1.600"/><path d="M2.800 2.200q4-2 8.500-.2t9.200.600v11.400q-4.700 1.200-9.200-.6t-8.500.400z" fill="url(#fl)"/></svg>
<span class="t" style="left:404px;top:93.9px;font-size:15px;line-height:21px;color:#444;">画面A1</span>
<svg style="left:464px;top:99px;" width="13" height="13" viewBox="0 0 13 13"><path d="M2.200 2.200l8.600 8.600M10.800 2.200L2.200 10.800" stroke="#505050" stroke-width="2.200"/></svg>
<div style="left:310px;top:131px;width:1301px;height:849px;background:#efefef;"></div>
<div style="left:310px;top:131px;width:33px;height:32px;background:#ececf0;"></div>
<div style="left:343px;top:131px;width:1268px;height:32px;background:#f2f2f2;"></div>
<div style="left:310px;top:163px;width:33px;height:817px;background:#f2f2f2;"></div>
<div style="left:361px;top:131px;width:1px;height:7px;background:#8a8a8a;"></div>
<span class="t" style="left:332.0px;top:137.5px;width:60px;text-align:center;font-size:13px;line-height:19px;color:#8a8a8a;">0</span>
<div style="left:384px;top:131px;width:1px;height:3px;background:#8a8a8a;"></div>
<div style="left:406px;top:131px;width:1px;height:3px;background:#8a8a8a;"></div>
<div style="left:429px;top:131px;width:1px;height:3px;background:#8a8a8a;"></div>
<div style="left:451px;top:131px;width:1px;height:3px;background:#8a8a8a;"></div>
<div style="left:474px;top:131px;width:1px;height:7px;background:#8a8a8a;"></div>
<span class="t" style="left:444.0px;top:137.5px;width:60px;text-align:center;font-size:13px;line-height:19px;color:#8a8a8a;">180</span>
<div style="left:496px;top:131px;width:1px;height:3px;background:#8a8a8a;"></div>
<div style="left:519px;top:131px;width:1px;height:3px;background:#8a8a8a;"></div>
<div style="left:541px;top:131px;width:1px;height:3px;background:#8a8a8a;"></div>
<div style="left:564px;top:131px;width:1px;height:3px;background:#8a8a8a;"></div>
<div style="left:586px;top:131px;width:1px;height:7px;background:#8a8a8a;"></div>
<span class="t" style="left:557.0px;top:137.5px;width:60px;text-align:center;font-size:13px;line-height:19px;color:#8a8a8a;">360</span>
<div style="left:609px;top:131px;width:1px;height:3px;background:#8a8a8a;"></div>
<div style="left:631px;top:131px;width:1px;height:3px;background:#8a8a8a;"></div>
<div style="left:654px;top:131px;width:1px;height:3px;background:#8a8a8a;"></div>
<div style="left:676px;top:131px;width:1px;height:3px;background:#8a8a8a;"></div>
<div style="left:699px;top:131px;width:1px;height:7px;background:#8a8a8a;"></div>
<span class="t" style="left:669.0px;top:137.5px;width:60px;text-align:center;font-size:13px;line-height:19px;color:#8a8a8a;">540</span>
<div style="left:721px;top:131px;width:1px;height:3px;background:#8a8a8a;"></div>
<div style="left:744px;top:131px;width:1px;height:3px;background:#8a8a8a;"></div>
<div style="left:766px;top:131px;width:1px;height:3px;background:#8a8a8a;"></div>
<div style="left:789px;top:131px;width:1px;height:3px;background:#8a8a8a;"></div>
<div style="left:811px;top:131px;width:1px;height:7px;background:#8a8a8a;"></div>
<span class="t" style="left:782.0px;top:137.5px;width:60px;text-align:center;font-size:13px;line-height:19px;color:#8a8a8a;">720</span>
<div style="left:834px;top:131px;width:1px;height:3px;background:#8a8a8a;"></div>
<div style="left:856px;top:131px;width:1px;height:3px;background:#8a8a8a;"></div>
<div style="left:879px;top:131px;width:1px;height:3px;background:#8a8a8a;"></div>
<div style="left:901px;top:131px;width:1px;height:3px;background:#8a8a8a;"></div>
<div style="left:924px;top:131px;width:1px;height:7px;background:#8a8a8a;"></div>
<span class="t" style="left:894.0px;top:137.5px;width:60px;text-align:center;font-size:13px;line-height:19px;color:#8a8a8a;">900</span>
<div style="left:946px;top:131px;width:1px;height:3px;background:#8a8a8a;"></div>
<div style="left:969px;top:131px;width:1px;height:3px;background:#8a8a8a;"></div>
<div style="left:991px;top:131px;width:1px;height:3px;background:#8a8a8a;"></div>
<div style="left:1014px;top:131px;width:1px;height:3px;background:#8a8a8a;"></div>
<div style="left:1036px;top:131px;width:1px;height:7px;background:#8a8a8a;"></div>
<span class="t" style="left:1007.0px;top:137.5px;width:60px;text-align:center;font-size:13px;line-height:19px;color:#8a8a8a;">1080</span>
<div style="left:1059px;top:131px;width:1px;height:3px;background:#8a8a8a;"></div>
<div style="left:1081px;top:131px;width:1px;height:3px;background:#8a8a8a;"></div>
<div style="left:1104px;top:131px;width:1px;height:3px;background:#8a8a8a;"></div>
<div style="left:1126px;top:131px;width:1px;height:3px;background:#8a8a8a;"></div>
<div style="left:1149px;top:131px;width:1px;height:7px;background:#8a8a8a;"></div>
<span class="t" style="left:1119.0px;top:137.5px;width:60px;text-align:center;font-size:13px;line-height:19px;color:#8a8a8a;">1260</span>
<div style="left:1171px;top:131px;width:1px;height:3px;background:#8a8a8a;"></div>
<div style="left:1194px;top:131px;width:1px;height:3px;background:#8a8a8a;"></div>
<div style="left:1216px;top:131px;width:1px;height:3px;background:#8a8a8a;"></div>
<div style="left:1239px;top:131px;width:1px;height:3px;background:#8a8a8a;"></div>
<div style="left:1261px;top:131px;width:1px;height:7px;background:#8a8a8a;"></div>
<span class="t" style="left:1232.0px;top:137.5px;width:60px;text-align:center;font-size:13px;line-height:19px;color:#8a8a8a;">1440</span>
<div style="left:1284px;top:131px;width:1px;height:3px;background:#8a8a8a;"></div>
<div style="left:1306px;top:131px;width:1px;height:3px;background:#8a8a8a;"></div>
<div style="left:1329px;top:131px;width:1px;height:3px;background:#8a8a8a;"></div>
<div style="left:1351px;top:131px;width:1px;height:3px;background:#8a8a8a;"></div>
<div style="left:1374px;top:131px;width:1px;height:7px;background:#8a8a8a;"></div>
<span class="t" style="left:1344.0px;top:137.5px;width:60px;text-align:center;font-size:13px;line-height:19px;color:#8a8a8a;">1620</span>
<div style="left:1396px;top:131px;width:1px;height:3px;background:#8a8a8a;"></div>
<div style="left:1419px;top:131px;width:1px;height:3px;background:#8a8a8a;"></div>
<div style="left:1441px;top:131px;width:1px;height:3px;background:#8a8a8a;"></div>
<div style="left:1464px;top:131px;width:1px;height:3px;background:#8a8a8a;"></div>
<div style="left:1486px;top:131px;width:1px;height:7px;background:#8a8a8a;"></div>
<span class="t" style="left:1457.0px;top:137.5px;width:60px;text-align:center;font-size:13px;line-height:19px;color:#8a8a8a;">1800</span>
<div style="left:1509px;top:131px;width:1px;height:3px;background:#8a8a8a;"></div>
<div style="left:1531px;top:131px;width:1px;height:3px;background:#8a8a8a;"></div>
<div style="left:1554px;top:131px;width:1px;height:3px;background:#8a8a8a;"></div>
<div style="left:640px;top:131px;width:2px;height:25px;background:#5b86f7;"></div>
<div style="left:310px;top:228px;width:8px;height:1px;background:#8a8a8a;"></div>
<span class="v" style="left:333px;top:198.0px;width:60px;text-align:center;font-size:13px;line-height:16px;color:#8a8a8a;transform:rotate(90deg);">0</span>
<div style="left:310px;top:250px;width:4px;height:1px;background:#8a8a8a;"></div>
<div style="left:310px;top:272px;width:4px;height:1px;background:#8a8a8a;"></div>
<div style="left:310px;top:295px;width:4px;height:1px;background:#8a8a8a;"></div>
<div style="left:310px;top:318px;width:4px;height:1px;background:#8a8a8a;"></div>
<div style="left:310px;top:340px;width:8px;height:1px;background:#8a8a8a;"></div>
<span class="v" style="left:333px;top:310.0px;width:60px;text-align:center;font-size:13px;line-height:16px;color:#8a8a8a;transform:rotate(90deg);">180</span>
<div style="left:310px;top:362px;width:4px;height:1px;background:#8a8a8a;"></div>
<div style="left:310px;top:385px;width:4px;height:1px;background:#8a8a8a;"></div>
<div style="left:310px;top:408px;width:4px;height:1px;background:#8a8a8a;"></div>
<div style="left:310px;top:430px;width:4px;height:1px;background:#8a8a8a;"></div>
<div style="left:310px;top:452px;width:8px;height:1px;background:#8a8a8a;"></div>
<span class="v" style="left:333px;top:423.0px;width:60px;text-align:center;font-size:13px;line-height:16px;color:#8a8a8a;transform:rotate(90deg);">360</span>
<div style="left:310px;top:475px;width:4px;height:1px;background:#8a8a8a;"></div>
<div style="left:310px;top:498px;width:4px;height:1px;background:#8a8a8a;"></div>
<div style="left:310px;top:520px;width:4px;height:1px;background:#8a8a8a;"></div>
<div style="left:310px;top:542px;width:4px;height:1px;background:#8a8a8a;"></div>
<div style="left:310px;top:565px;width:8px;height:1px;background:#8a8a8a;"></div>
<span class="v" style="left:333px;top:536.0px;width:60px;text-align:center;font-size:13px;line-height:16px;color:#8a8a8a;transform:rotate(90deg);">540</span>
<div style="left:310px;top:588px;width:4px;height:1px;background:#8a8a8a;"></div>
<div style="left:310px;top:610px;width:4px;height:1px;background:#8a8a8a;"></div>
<div style="left:310px;top:632px;width:4px;height:1px;background:#8a8a8a;"></div>
<div style="left:310px;top:655px;width:4px;height:1px;background:#8a8a8a;"></div>
<div style="left:310px;top:678px;width:8px;height:1px;background:#8a8a8a;"></div>
<span class="v" style="left:333px;top:648.0px;width:60px;text-align:center;font-size:13px;line-height:16px;color:#8a8a8a;transform:rotate(90deg);">720</span>
<div style="left:310px;top:700px;width:4px;height:1px;background:#8a8a8a;"></div>
<div style="left:310px;top:722px;width:4px;height:1px;background:#8a8a8a;"></div>
<div style="left:310px;top:745px;width:4px;height:1px;background:#8a8a8a;"></div>
<div style="left:310px;top:768px;width:4px;height:1px;background:#8a8a8a;"></div>
<div style="left:310px;top:790px;width:8px;height:1px;background:#8a8a8a;"></div>
<span class="v" style="left:333px;top:760.0px;width:60px;text-align:center;font-size:13px;line-height:16px;color:#8a8a8a;transform:rotate(90deg);">900</span>
<div style="left:310px;top:812px;width:4px;height:1px;background:#8a8a8a;"></div>
<div style="left:310px;top:835px;width:4px;height:1px;background:#8a8a8a;"></div>
<div style="left:310px;top:858px;width:4px;height:1px;background:#8a8a8a;"></div>
<div style="left:310px;top:880px;width:4px;height:1px;background:#8a8a8a;"></div>
<div style="left:310px;top:902px;width:8px;height:1px;background:#8a8a8a;"></div>
<span class="v" style="left:333px;top:873.0px;width:60px;text-align:center;font-size:13px;line-height:16px;color:#8a8a8a;transform:rotate(90deg);">1080</span>
<div style="left:310px;top:297px;width:25px;height:2px;background:#5b86f7;"></div>
<div style="left:360px;top:227px;width:1200px;height:675px;background:#fff;"></div>
<div style="left:576px;top:970px;width:165px;height:10px;background:#bcc0c9;border-radius:5px;"></div>
<div style="left:1600px;top:300px;width:10px;height:126px;background:#c3c6ce;border-radius:5px;"></div>
<div style="left:391px;top:242px;width:292px;height:26px;border:1px dotted #6a8cf5;"></div>
<svg style="left:395px;top:250px;" width="9" height="9" viewBox="0 0 9 9"><rect x=".5" y="1.800" width="7.600" height="6.400" fill="#8a8a8a"/><path d="M2.300 .8v1.600M6.300 .8v1.600" stroke="#777" stroke-width="1"/><path d="M1.400 4.300h5.800M1.400 6.300h5.800" stroke="#fff" stroke-width=".9" stroke-dasharray="1.300 .9"/></svg>
<span class="t" style="left:407px;top:249.5px;font-size:9px;line-height:12px;color:#555;letter-spacing:.19px;">2026-01-24 08:00:00</span>
<span class="t" style="left:534px;top:249.0px;font-size:9px;line-height:12px;color:#555;">-</span>
<svg style="left:544px;top:250px;" width="9" height="9" viewBox="0 0 9 9"><rect x=".5" y="1.800" width="7.600" height="6.400" fill="#8a8a8a"/><path d="M2.300 .8v1.600M6.300 .8v1.600" stroke="#777" stroke-width="1"/><path d="M1.400 4.300h5.800M1.400 6.300h5.800" stroke="#fff" stroke-width=".9" stroke-dasharray="1.300 .9"/></svg>
<span class="t" style="left:555px;top:249.5px;font-size:9px;line-height:12px;color:#555;letter-spacing:.19px;">2026-01-24 08:00:00</span>
<div style="left:386px;top:236px;width:10px;height:10px;background:#2b64f5;border-radius:50%;"></div>
<div style="left:386px;top:249.7px;width:10px;height:10px;background:#2b64f5;border-radius:50%;"></div>
<div style="left:386px;top:263.5px;width:10px;height:10px;background:#2b64f5;border-radius:50%;"></div>
<div style="left:531px;top:236px;width:10px;height:10px;background:#2b64f5;border-radius:50%;"></div>
<div style="left:531px;top:263.5px;width:10px;height:10px;background:#2b64f5;border-radius:50%;"></div>
<div style="left:677.5px;top:236px;width:10px;height:10px;background:#2b64f5;border-radius:50%;"></div>
<div style="left:677.5px;top:249.7px;width:10px;height:10px;background:#2b64f5;border-radius:50%;"></div>
<div style="left:677.5px;top:263.5px;width:10px;height:10px;background:#2b64f5;border-radius:50%;"></div>
<div style="left:531px;top:206px;width:10px;height:10px;background:#2b64f5;border-radius:50%;"></div>
<div class="clip" style="left:390px;top:281px;width:1167px;height:609px;background:#fff;">
<div style="left:0px;top:39px;width:1163px;height:1px;background:#e3e3e3;"></div>
<span class="t" style="left:46.0px;top:19.7px;width:200px;text-align:center;font-size:9px;line-height:12px;color:#555;letter-spacing:.18px;">2026-01-24 10:00:00</span>
<span class="t" style="left:336.6px;top:19.7px;width:200px;text-align:center;font-size:9px;line-height:12px;color:#555;">冷热源设备</span>
<span class="t" style="left:627.2px;top:19.7px;width:200px;text-align:center;font-size:9px;line-height:12px;color:#555;">冷水机组</span>
<span class="t" style="left:917.8px;top:19.7px;width:200px;text-align:center;font-size:9px;line-height:12px;color:#555;letter-spacing:.18px;">73</span>
<div style="left:0px;top:66px;width:1163px;height:1px;background:#e3e3e3;"></div>
<span class="t" style="left:46.0px;top:47.2px;width:200px;text-align:center;font-size:9px;line-height:12px;color:#555;letter-spacing:.18px;">2026-01-24 10:00:00</span>
<span class="t" style="left:336.6px;top:47.2px;width:200px;text-align:center;font-size:9px;line-height:12px;color:#555;">空调用电</span>
<span class="t" style="left:627.2px;top:47.2px;width:200px;text-align:center;font-size:9px;line-height:12px;color:#555;">空调风系统</span>
<span class="t" style="left:917.8px;top:47.2px;width:200px;text-align:center;font-size:9px;line-height:12px;color:#555;letter-spacing:.18px;">365</span>
<div style="left:0px;top:94px;width:1163px;height:1px;background:#e3e3e3;"></div>
<span class="t" style="left:46.0px;top:74.7px;width:200px;text-align:center;font-size:9px;line-height:12px;color:#555;letter-spacing:.18px;">2026-01-24 10:00:00</span>
<span class="t" style="left:336.6px;top:74.7px;width:200px;text-align:center;font-size:9px;line-height:12px;color:#555;">空调水系统</span>
<span class="t" style="left:627.2px;top:74.7px;width:200px;text-align:center;font-size:9px;line-height:12px;color:#555;">热水泵</span>
<span class="t" style="left:917.8px;top:74.7px;width:200px;text-align:center;font-size:9px;line-height:12px;color:#555;letter-spacing:.18px;">73</span>
<div style="left:0px;top:121px;width:1163px;height:1px;background:#e3e3e3;"></div>
<span class="t" style="left:46.0px;top:102.3px;width:200px;text-align:center;font-size:9px;line-height:12px;color:#555;letter-spacing:.18px;">2026-01-24 10:00:00</span>
<span class="t" style="left:336.6px;top:102.3px;width:200px;text-align:center;font-size:9px;line-height:12px;color:#555;">空调风系统</span>
<span class="t" style="left:627.2px;top:102.3px;width:200px;text-align:center;font-size:9px;line-height:12px;color:#555;">风机盘管</span>
<span class="t" style="left:917.8px;top:102.3px;width:200px;text-align:center;font-size:9px;line-height:12px;color:#555;letter-spacing:.18px;">73</span>
<div style="left:0px;top:149px;width:1163px;height:1px;background:#e3e3e3;"></div>
<span class="t" style="left:46.0px;top:129.8px;width:200px;text-align:center;font-size:9px;line-height:12px;color:#555;letter-spacing:.18px;">2026-01-24 10:00:00</span>
<span class="t" style="left:336.6px;top:129.8px;width:200px;text-align:center;font-size:9px;line-height:12px;color:#555;">空调风系统</span>
<span class="t" style="left:627.2px;top:129.8px;width:200px;text-align:center;font-size:9px;line-height:12px;color:#555;">排风机</span>
<span class="t" style="left:917.8px;top:129.8px;width:200px;text-align:center;font-size:9px;line-height:12px;color:#555;letter-spacing:.18px;">73</span>
<div style="left:0px;top:176px;width:1163px;height:1px;background:#e3e3e3;"></div>
<span class="t" style="left:46.0px;top:157.3px;width:200px;text-align:center;font-size:9px;line-height:12px;color:#555;letter-spacing:.18px;">2026-01-24 10:00:00</span>
<span class="t" style="left:336.6px;top:157.3px;width:200px;text-align:center;font-size:9px;line-height:12px;color:#555;">总配电</span>
<span class="t" style="left:627.2px;top:157.3px;width:200px;text-align:center;font-size:9px;line-height:12px;color:#555;">消防用电</span>
<span class="t" style="left:917.8px;top:157.3px;width:200px;text-align:center;font-size:9px;line-height:12px;color:#555;letter-spacing:.18px;">219</span>
<div style="left:0px;top:204px;width:1163px;height:1px;background:#e3e3e3;"></div>
<span class="t" style="left:46.0px;top:184.8px;width:200px;text-align:center;font-size:9px;line-height:12px;color:#555;letter-spacing:.18px;">2026-01-24 10:00:00</span>
<span class="t" style="left:336.6px;top:184.8px;width:200px;text-align:center;font-size:9px;line-height:12px;color:#555;">冷热源设备</span>
<span class="t" style="left:627.2px;top:184.8px;width:200px;text-align:center;font-size:9px;line-height:12px;color:#555;">循环水泵</span>
<span class="t" style="left:917.8px;top:184.8px;width:200px;text-align:center;font-size:9px;line-height:12px;color:#555;letter-spacing:.18px;">73</span>
<div style="left:0px;top:231px;width:1163px;height:1px;background:#e3e3e3;"></div>
<span class="t" style="left:46.0px;top:212.3px;width:200px;text-align:center;font-size:9px;line-height:12px;color:#555;letter-spacing:.18px;">2026-01-24 10:00:00</span>
<span class="t" style="left:336.6px;top:212.3px;width:200px;text-align:center;font-size:9px;line-height:12px;color:#555;">动力用电</span>
<span class="t" style="left:627.2px;top:212.3px;width:200px;text-align:center;font-size:9px;line-height:12px;color:#555;">电梯</span>
<span class="t" style="left:917.8px;top:212.3px;width:200px;text-align:center;font-size:9px;line-height:12px;color:#555;letter-spacing:.18px;">73</span>
<div style="left:0px;top:259px;width:1163px;height:1px;background:#e3e3e3;"></div>
<span class="t" style="left:46.0px;top:239.9px;width:200px;text-align:center;font-size:9px;line-height:12px;color:#555;letter-spacing:.18px;">2026-01-24 10:00:00</span>
<span class="t" style="left:336.6px;top:239.9px;width:200px;text-align:center;font-size:9px;line-height:12px;color:#555;">照明用电</span>
<span class="t" style="left:627.2px;top:239.9px;width:200px;text-align:center;font-size:9px;line-height:12px;color:#555;">应急照明</span>
<span class="t" style="left:917.8px;top:239.9px;width:200px;text-align:center;font-size:9px;line-height:12px;color:#555;letter-spacing:.18px;">73</span>
<div style="left:0px;top:286px;width:1163px;height:1px;background:#e3e3e3;"></div>
<span class="t" style="left:46.0px;top:267.4px;width:200px;text-align:center;font-size:9px;line-height:12px;color:#555;letter-spacing:.18px;">2026-01-24 10:00:00</span>
<span class="t" style="left:336.6px;top:267.4px;width:200px;text-align:center;font-size:9px;line-height:12px;color:#555;">空调风系统</span>
<span class="t" style="left:627.2px;top:267.4px;width:200px;text-align:center;font-size:9px;line-height:12px;color:#555;">新风机</span>
<span class="t" style="left:917.8px;top:267.4px;width:200px;text-align:center;font-size:9px;line-height:12px;color:#555;letter-spacing:.18px;">73</span>
<div style="left:0px;top:314px;width:1163px;height:1px;background:#e3e3e3;"></div>
<span class="t" style="left:46.0px;top:294.9px;width:200px;text-align:center;font-size:9px;line-height:12px;color:#555;letter-spacing:.18px;">2026-01-24 10:00:00</span>
<span class="t" style="left:336.6px;top:294.9px;width:200px;text-align:center;font-size:9px;line-height:12px;color:#555;">总配电</span>
<span class="t" style="left:627.2px;top:294.9px;width:200px;text-align:center;font-size:9px;line-height:12px;color:#555;">动力用电</span>
<span class="t" style="left:917.8px;top:294.9px;width:200px;text-align:center;font-size:9px;line-height:12px;color:#555;letter-spacing:.18px;">365</span>
<div style="left:0px;top:342px;width:1163px;height:1px;background:#e3e3e3;"></div>
<span class="t" style="left:46.0px;top:322.4px;width:200px;text-align:center;font-size:9px;line-height:12px;color:#555;letter-spacing:.18px;">2026-01-24 10:00:00</span>
<span class="t" style="left:336.6px;top:322.4px;width:200px;text-align:center;font-size:9px;line-height:12px;color:#555;">冷热源设备</span>
<span class="t" style="left:627.2px;top:322.4px;width:200px;text-align:center;font-size:9px;line-height:12px;color:#555;">冷却塔</span>
<span class="t" style="left:917.8px;top:322.4px;width:200px;text-align:center;font-size:9px;line-height:12px;color:#555;letter-spacing:.18px;">73</span>
<div style="left:0px;top:369px;width:1163px;height:1px;background:#e3e3e3;"></div>
<span class="t" style="left:46.0px;top:349.9px;width:200px;text-align:center;font-size:9px;line-height:12px;color:#555;letter-spacing:.18px;">2026-01-24 10:00:00</span>
<span class="t" style="left:336.6px;top:349.9px;width:200px;text-align:center;font-size:9px;line-height:12px;color:#555;">空调水系统</span>
<span class="t" style="left:627.2px;top:349.9px;width:200px;text-align:center;font-size:9px;line-height:12px;color:#555;">冷冻水泵</span>
<span class="t" style="left:917.8px;top:349.9px;width:200px;text-align:center;font-size:9px;line-height:12px;color:#555;letter-spacing:.18px;">73</span>
<div style="left:0px;top:397px;width:1163px;height:1px;background:#e3e3e3;"></div>
<span class="t" style="left:46.0px;top:377.5px;width:200px;text-align:center;font-size:9px;line-height:12px;color:#555;letter-spacing:.18px;">2026-01-24 11:00:00</span>
<span class="t" style="left:336.6px;top:377.5px;width:200px;text-align:center;font-size:9px;line-height:12px;color:#555;">总配电</span>
<span class="t" style="left:627.2px;top:377.5px;width:200px;text-align:center;font-size:9px;line-height:12px;color:#555;">照明用电</span>
<span class="t" style="left:917.8px;top:377.5px;width:200px;text-align:center;font-size:9px;line-height:12px;color:#555;letter-spacing:.18px;">219</span>
<div style="left:0px;top:424px;width:1163px;height:1px;background:#e3e3e3;"></div>
<span class="t" style="left:46.0px;top:405.0px;width:200px;text-align:center;font-size:9px;line-height:12px;color:#555;letter-spacing:.18px;">2026-01-24 11:00:00</span>
<span class="t" style="left:336.6px;top:405.0px;width:200px;text-align:center;font-size:9px;line-height:12px;color:#555;">空调风系统</span>
<span class="t" style="left:627.2px;top:405.0px;width:200px;text-align:center;font-size:9px;line-height:12px;color:#555;">送风机</span>
<span class="t" style="left:917.8px;top:405.0px;width:200px;text-align:center;font-size:9px;line-height:12px;color:#555;letter-spacing:.18px;">73</span>
<div style="left:0px;top:452px;width:1163px;height:1px;background:#e3e3e3;"></div>
<span class="t" style="left:46.0px;top:432.5px;width:200px;text-align:center;font-size:9px;line-height:12px;color:#555;letter-spacing:.18px;">2026-01-24 11:00:00</span>
<span class="t" style="left:336.6px;top:432.5px;width:200px;text-align:center;font-size:9px;line-height:12px;color:#555;">冷热源设备</span>
<span class="t" style="left:627.2px;top:432.5px;width:200px;text-align:center;font-size:9px;line-height:12px;color:#555;">冷却水泵</span>
<span class="t" style="left:917.8px;top:432.5px;width:200px;text-align:center;font-size:9px;line-height:12px;color:#555;letter-spacing:.18px;">73</span>
<div style="left:0px;top:479px;width:1163px;height:1px;background:#e3e3e3;"></div>
<span class="t" style="left:46.0px;top:460.0px;width:200px;text-align:center;font-size:9px;line-height:12px;color:#555;letter-spacing:.18px;">2026-01-24 11:00:00</span>
<span class="t" style="left:336.6px;top:460.0px;width:200px;text-align:center;font-size:9px;line-height:12px;color:#555;">动力用电</span>
<span class="t" style="left:627.2px;top:460.0px;width:200px;text-align:center;font-size:9px;line-height:12px;color:#555;">通风机</span>
<span class="t" style="left:917.8px;top:460.0px;width:200px;text-align:center;font-size:9px;line-height:12px;color:#555;letter-spacing:.18px;">511</span>
<div style="left:0px;top:507px;width:1163px;height:1px;background:#e3e3e3;"></div>
<span class="t" style="left:46.0px;top:487.5px;width:200px;text-align:center;font-size:9px;line-height:12px;color:#555;letter-spacing:.18px;">2026-01-24 11:00:00</span>
<span class="t" style="left:336.6px;top:487.5px;width:200px;text-align:center;font-size:9px;line-height:12px;color:#555;">冷热源设备</span>
<span class="t" style="left:627.2px;top:487.5px;width:200px;text-align:center;font-size:9px;line-height:12px;color:#555;">锅炉</span>
<span class="t" style="left:917.8px;top:487.5px;width:200px;text-align:center;font-size:9px;line-height:12px;color:#555;letter-spacing:.18px;">73</span>
<div style="left:0px;top:534px;width:1163px;height:1px;background:#e3e3e3;"></div>
<span class="t" style="left:46.0px;top:515.1px;width:200px;text-align:center;font-size:9px;line-height:12px;color:#555;letter-spacing:.18px;">2026-01-24 11:00:00</span>
<span class="t" style="left:336.6px;top:515.1px;width:200px;text-align:center;font-size:9px;line-height:12px;color:#555;">照明用电</span>
<span class="t" style="left:627.2px;top:515.1px;width:200px;text-align:center;font-size:9px;line-height:12px;color:#555;">插座用电</span>
<span class="t" style="left:917.8px;top:515.1px;width:200px;text-align:center;font-size:9px;line-height:12px;color:#555;letter-spacing:.18px;">73</span>
<div style="left:0px;top:562px;width:1163px;height:1px;background:#e3e3e3;"></div>
<span class="t" style="left:46.0px;top:542.6px;width:200px;text-align:center;font-size:9px;line-height:12px;color:#555;letter-spacing:.18px;">2026-01-24 11:00:00</span>
<span class="t" style="left:336.6px;top:542.6px;width:200px;text-align:center;font-size:9px;line-height:12px;color:#555;">照明用电</span>
<span class="t" style="left:627.2px;top:542.6px;width:200px;text-align:center;font-size:9px;line-height:12px;color:#555;">景观照明</span>
<span class="t" style="left:917.8px;top:542.6px;width:200px;text-align:center;font-size:9px;line-height:12px;color:#555;letter-spacing:.18px;">73</span>
<div style="left:0px;top:589px;width:1163px;height:1px;background:#e3e3e3;"></div>
<span class="t" style="left:46.0px;top:570.1px;width:200px;text-align:center;font-size:9px;line-height:12px;color:#555;letter-spacing:.18px;">2026-01-24 11:00:00</span>
<span class="t" style="left:336.6px;top:570.1px;width:200px;text-align:center;font-size:9px;line-height:12px;color:#555;">空调用电</span>
<span class="t" style="left:627.2px;top:570.1px;width:200px;text-align:center;font-size:9px;line-height:12px;color:#555;">空调风系统</span>
<span class="t" style="left:917.8px;top:570.1px;width:200px;text-align:center;font-size:9px;line-height:12px;color:#555;letter-spacing:.18px;">365</span>
<div style="left:0px;top:617px;width:1163px;height:1px;background:#e3e3e3;"></div>
<span class="t" style="left:46.0px;top:597.6px;width:200px;text-align:center;font-size:9px;line-height:12px;color:#555;letter-spacing:.18px;">2026-01-24 11:00:00</span>
<span class="t" style="left:336.6px;top:597.6px;width:200px;text-align:center;font-size:9px;line-height:12px;color:#555;">总配电</span>
<span class="t" style="left:627.2px;top:597.6px;width:200px;text-align:center;font-size:9px;line-height:12px;color:#555;">空调用电</span>
<span class="t" style="left:917.8px;top:597.6px;width:200px;text-align:center;font-size:9px;line-height:12px;color:#555;letter-spacing:.18px;">365</span>
<div style="left:291px;top:0px;width:1px;height:609px;background:#dedede;"></div>
<div style="left:581px;top:0px;width:1px;height:609px;background:#dedede;"></div>
<div style="left:872px;top:0px;width:1px;height:609px;background:#dedede;"></div>
<div style="left:0px;top:0px;width:1167px;height:19px;background:#efefef;border-bottom:1px solid #e0e0e0;"></div>
<div style="left:291px;top:0px;width:1px;height:19px;background:#dedede;"></div>
<div style="left:581px;top:0px;width:1px;height:19px;background:#dedede;"></div>
<div style="left:872px;top:0px;width:1px;height:19px;background:#dedede;"></div>
<span class="t" style="left:96.0px;top:4.0px;width:100px;text-align:center;font-size:9px;line-height:12px;color:#333;font-weight:700;">日期</span>
<span class="t" style="left:386.6px;top:4.0px;width:100px;text-align:center;font-size:9px;line-height:12px;color:#333;font-weight:700;">来源</span>
<span class="t" style="left:677.2px;top:4.0px;width:100px;text-align:center;font-size:9px;line-height:12px;color:#333;font-weight:700;">扩展</span>
<span class="t" style="left:967.8px;top:4.0px;width:100px;text-align:center;font-size:9px;line-height:12px;color:#333;font-weight:700;">值</span>
</div>
<div style="left:389px;top:280px;width:1169px;height:611px;border:2px solid #7c9cf9;box-shadow:0 0 2px rgba(90,130,250,.7);"></div>
<div style="left:1610px;top:81px;width:310px;height:907px;background:#fff;border-left:1px solid #e4e7ed;"></div>
<span class="t" style="left:1623px;top:95.5px;font-size:17px;line-height:23px;color:#333;font-weight:700;">属性</span>
<span class="t" style="left:1662px;top:96.5px;font-size:15px;line-height:21px;color:#aaa;">(日期区间)</span>
<div style="left:1611px;top:130px;width:309px;height:1px;background:#e4e7ed;"></div>
<svg style="left:1890.5px;top:97.7px;" width="17" height="17" viewBox="0 0 16 16"><path d="M5.200 1.400h7.600q1 0 1 1v9.600" fill="none" stroke="#6c6c7c" stroke-width="1.300" stroke-linecap="round"/><rect x="2" y="3" width="10.200" height="12" rx="1.600" fill="#6c6c7c"/><path d="M4.400 7.400h5.400M4.400 10.600h5.400" stroke="#fff" stroke-width="1.500"/></svg>
<div style="left:1611px;top:131px;width:309px;height:37px;background:#f7f7f7;border-bottom:1px solid #ebeef5;"></div>
<svg style="left:1627px;top:142px;" width="10" height="14" viewBox="0 0 10 14"><path d="M2.500 1.500L8 7l-5.500 5.500" fill="none" stroke="#555" stroke-width="1.100"/></svg>
<span class="t" style="left:1646px;top:138.5px;font-size:15px;line-height:21px;color:#444;">基础</span>
<svg style="left:1890.5px;top:141.7px;" width="17" height="17" viewBox="0 0 16 16"><path d="M5.200 1.400h7.600q1 0 1 1v9.600" fill="none" stroke="#6c6c7c" stroke-width="1.300" stroke-linecap="round"/><rect x="2" y="3" width="10.200" height="12" rx="1.600" fill="#6c6c7c"/><path d="M4.400 7.400h5.400M4.400 10.600h5.400" stroke="#fff" stroke-width="1.500"/></svg>
<div style="left:1611px;top:176px;width:309px;height:38px;background:#f7f7f7;"></div>
<svg style="left:1625px;top:189px;" width="14" height="10" viewBox="0 0 14 10"><path d="M1.500 2.500L7.0 8l5.5-5.500" fill="none" stroke="#555" stroke-width="1.100"/></svg>
<span class="t" style="left:1647px;top:183.5px;font-size:15px;line-height:21px;color:#444;">日期区间选择器</span>
<svg style="left:1890.5px;top:186.7px;" width="17" height="17" viewBox="0 0 16 16"><path d="M5.200 1.400h7.600q1 0 1 1v9.600" fill="none" stroke="#6c6c7c" stroke-width="1.300" stroke-linecap="round"/><rect x="2" y="3" width="10.200" height="12" rx="1.600" fill="#6c6c7c"/><path d="M4.400 7.400h5.400M4.400 10.600h5.400" stroke="#fff" stroke-width="1.500"/></svg>
<span class="t" style="left:1648px;top:224.9px;font-size:15px;line-height:21px;color:#555;">类型</span>
<div class="inp" style="left:1760px;top:222px;width:148px;height:30px;"></div>
<svg style="left:1625.5px;top:265.9px;" width="16" height="16" viewBox="0 0 16 16"><circle cx="8" cy="8" r="7.200" fill="none" stroke="#666" stroke-width="1.200"/><circle cx="8" cy="8" r="4.800" fill="#666"/></svg>
<span class="t" style="left:1648px;top:263.1px;font-size:15px;line-height:21px;color:#555;">当前开始时间</span>
<div class="inp" style="left:1760px;top:259px;width:148px;height:30px;"></div>
<svg style="left:1625.5px;top:303.4px;" width="16" height="16" viewBox="0 0 16 16"><circle cx="8" cy="8" r="7.200" fill="none" stroke="#666" stroke-width="1.200"/><circle cx="8" cy="8" r="4.800" fill="#666"/></svg>
<span class="t" style="left:1648px;top:300.6px;font-size:15px;line-height:21px;color:#555;">当前结束时间</span>
<div class="inp" style="left:1760px;top:297px;width:148px;height:30px;"></div>
<span class="t" style="left:1648px;top:338.1px;font-size:15px;line-height:21px;color:#555;">格式</span>
<div class="inp" style="left:1760px;top:334px;width:148px;height:30px;"></div>
<svg style="left:1625.5px;top:378.4px;" width="16" height="16" viewBox="0 0 16 16"><circle cx="8" cy="8" r="7.200" fill="none" stroke="#666" stroke-width="1.200"/><circle cx="8" cy="8" r="4.800" fill="#666"/></svg>
<span class="t" style="left:1648px;top:375.6px;font-size:15px;line-height:21px;color:#555;">文字颜色</span>
<div class="inp" style="left:1760px;top:374px;width:148px;height:26px;"></div>
<svg style="left:1625.5px;top:415.9px;" width="16" height="16" viewBox="0 0 16 16"><circle cx="8" cy="8" r="7.200" fill="none" stroke="#666" stroke-width="1.200"/><circle cx="8" cy="8" r="4.800" fill="#666"/></svg>
<span class="t" style="left:1648px;top:413.1px;font-size:15px;line-height:21px;color:#555;">字体大小</span>
<div class="inp" style="left:1760px;top:410px;width:148px;height:28px;"></div>
<span class="t" style="left:1648px;top:450.6px;font-size:15px;line-height:21px;color:#555;">字体名称</span>
<div class="inp" style="left:1760px;top:447px;width:148px;height:28px;"></div>
<svg style="left:1625.5px;top:490.9px;" width="16" height="16" viewBox="0 0 16 16"><circle cx="8" cy="8" r="7.200" fill="none" stroke="#666" stroke-width="1.200"/><circle cx="8" cy="8" r="4.800" fill="#666"/></svg>
<span class="t" style="left:1648px;top:488.1px;font-size:15px;line-height:21px;color:#555;">边框圆角</span>
<div class="inp" style="left:1760px;top:485px;width:148px;height:28px;"></div>
<svg style="left:1625.5px;top:528.4px;" width="16" height="16" viewBox="0 0 16 16"><circle cx="8" cy="8" r="7.200" fill="none" stroke="#666" stroke-width="1.200"/><circle cx="8" cy="8" r="4.800" fill="#666"/></svg>
<span class="t" style="left:1648px;top:525.6px;font-size:15px;line-height:21px;color:#555;">边框宽度</span>
<div class="inp" style="left:1760px;top:523px;width:148px;height:28px;"></div>
<svg style="left:1625.5px;top:565.9px;" width="16" height="16" viewBox="0 0 16 16"><circle cx="8" cy="8" r="7.200" fill="none" stroke="#666" stroke-width="1.200"/><circle cx="8" cy="8" r="4.800" fill="#666"/></svg>
<span class="t" style="left:1648px;top:563.1px;font-size:15px;line-height:21px;color:#555;">背景颜色</span>
<div class="inp" style="left:1760px;top:561px;width:148px;height:28px;"></div>
<svg style="left:1625.5px;top:603.4px;" width="16" height="16" viewBox="0 0 16 16"><circle cx="8" cy="8" r="7.200" fill="none" stroke="#666" stroke-width="1.200"/><circle cx="8" cy="8" r="4.800" fill="#666"/></svg>
<span class="t" style="left:1648px;top:600.6px;font-size:15px;line-height:21px;color:#555;">边框颜色</span>
<div class="inp" style="left:1760px;top:599px;width:148px;height:27px;"></div>
<span class="t" style="left:1769px;top:226.5px;font-size:15px;line-height:21px;color:#555;">时间范围</span>
<svg style="left:1882px;top:232px;" width="14" height="10" viewBox="0 0 14 10"><path d="M1.500 2.500L7.0 8l5.5-5.500" fill="none" stroke="#999" stroke-width="1.100"/></svg>
<span class="t" style="left:1768px;top:263.5px;font-size:15px;line-height:21px;color:#555;letter-spacing:.08px;">2026-01-24 08:00:0</span>
<span class="t" style="left:1768px;top:301.0px;font-size:15px;line-height:21px;color:#555;letter-spacing:.08px;">2026-01-24 08:00:0</span>
<span class="t" style="left:1769px;top:338.5px;font-size:15px;line-height:21px;color:#555;">年月日 时分秒</span>
<svg style="left:1882px;top:344px;" width="14" height="10" viewBox="0 0 14 10"><path d="M1.500 2.500L7.0 8l5.5-5.500" fill="none" stroke="#999" stroke-width="1.100"/></svg>
<span class="t" style="left:1769px;top:526.0px;font-size:15px;line-height:21px;color:#555;">1</span>
<div style="left:1767px;top:604px;width:58px;height:16px;background:#cacaca;border-radius:2px;"></div>
<svg style="left:1627px;top:646px;" width="8" height="12" viewBox="0 0 8 12"><path d="M1.500 1.500L6.500 6 1.500 10.500z" fill="#444"/></svg>
<span class="t" style="left:1646px;top:642.0px;font-size:15px;line-height:21px;color:#555;">弹框样式</span>
<div style="left:1611px;top:684px;width:309px;height:37px;background:#f7f7f7;"></div>
<svg style="left:1625px;top:697px;" width="14" height="10" viewBox="0 0 14 10"><path d="M1.500 2.500L7.0 8l5.5-5.500" fill="none" stroke="#555" stroke-width="1.100"/></svg>
<span class="t" style="left:1646px;top:691.0px;font-size:15px;line-height:21px;color:#444;">过滤联动</span>
<svg style="left:1829px;top:693px;" width="20" height="18" viewBox="0 0 20 18"><path d="M17.200 6.900H3.400L7 3.700M2.400 10.900h14.200L12.800 14.100" fill="none" stroke="#5c5c64" stroke-width="1.800" stroke-linejoin="miter"/></svg>
<svg style="left:1861px;top:694px;" width="18" height="19" viewBox="0 0 18 19"><path d="M2.400 4.900h13.200M6.200 4.400V2.800h5.600v1.600" fill="none" stroke="#f56c6c" stroke-width="1.600" stroke-linecap="round"/><path d="M3.800 5.800h10.400v9.400q0 1.400-1.400 1.400H5.200q-1.400 0-1.400-1.400z" fill="#fbd3d3" stroke="#f56c6c" stroke-width="1.500"/><path d="M5.600 6.400v9.600M7.900 6.400v9.600M10.200 6.400v9.600M12.400 6.400v9.600" stroke="#f56c6c" stroke-width="1.200"/></svg>
<svg style="left:1890.5px;top:694.7px;" width="17" height="17" viewBox="0 0 16 16"><path d="M5.200 1.400h7.600q1 0 1 1v9.600" fill="none" stroke="#6c6c7c" stroke-width="1.300" stroke-linecap="round"/><rect x="2" y="3" width="10.200" height="12" rx="1.600" fill="#6c6c7c"/><path d="M4.400 7.400h5.400M4.400 10.600h5.400" stroke="#fff" stroke-width="1.500"/></svg>
<span class="t" style="left:1648px;top:732.8px;font-size:15px;line-height:21px;color:#555;">联动配置</span>
<div class="inp" style="left:1760px;top:729px;width:148px;height:30px;"></div>
<span class="t" style="left:1784.0px;top:734.0px;width:100px;text-align:center;font-size:15px;line-height:21px;color:#444;">配置</span>
<div style="left:1611px;top:772px;width:309px;height:30px;border-top:1px dashed #ececec;border-bottom:1px dashed #ececec;"></div>
<svg style="left:1725px;top:779px;" width="15" height="15" viewBox="0 0 15 15"><circle cx="7.500" cy="7.500" r="6.500" fill="none" stroke="#555" stroke-width="1"/><path d="M7.500 4.200v6.600M4.200 7.500h6.600" stroke="#555" stroke-width="1"/></svg>
<span class="t" style="left:1746px;top:776.0px;font-size:15px;line-height:21px;color:#555;">添加组件</span>
<div style="left:310px;top:980px;width:1301px;height:8px;background:#fff;"></div>
<div style="left:0px;top:987px;width:1920px;height:33px;background:#fff;"></div>
<div style="left:0px;top:987px;width:1920px;height:1px;background:#e4e7ed;"></div>
<div style="left:1610px;top:980px;width:1px;height:7px;background:#e4e7ed;"></div>
<div style="left:0px;top:1018px;width:1920px;height:2px;background:#ececec;"></div>
<span class="t" style="left:5px;top:994.0px;font-size:15px;line-height:21px;color:#888;">类型:</span>
<span class="t" style="left:50px;top:994.0px;font-size:15px;line-height:21px;color:#888;">普通画面</span>
<div style="left:122px;top:995px;width:1px;height:18px;background:#e0e0e0;"></div>
<span class="t" style="left:135px;top:994.0px;font-size:15px;line-height:21px;color:#888;">缩放:</span>
<span class="t" style="left:180px;top:994.0px;font-size:15px;line-height:21px;color:#888;">50%</span>
<div style="left:223px;top:995px;width:1px;height:18px;background:#e0e0e0;"></div>
<span class="t" style="left:236px;top:994.0px;font-size:15px;line-height:21px;color:#888;">位置:</span>
<span class="t" style="left:281px;top:994.0px;font-size:15px;line-height:21px;color:#888;letter-spacing:.45px;">[ 447, 113 ]</span>
<span class="t" style="left:840px;top:994.0px;font-size:15px;line-height:21px;color:#888;">50%</span>
<svg style="left:888px;top:995px;" width="18" height="18" viewBox="0 0 18 18"><circle cx="7.400" cy="7.400" r="5.600" fill="none" stroke="#888" stroke-width="1"/><path d="M11.400 11.600l4.200 4.200M4.800 7.400h5.200" stroke="#888" stroke-width="1"/></svg>
<div style="left:918px;top:1002.5px;width:125px;height:2px;background:#d4d4d4;border-radius:1px;"></div>
<div style="left:918px;top:1002px;width:14px;height:3px;background:#666a78;border-radius:1px;"></div>
<div style="left:929.5px;top:998.5px;width:10px;height:10px;background:#fff;border:2px solid #55596a;border-radius:50%;"></div>
<svg style="left:1056px;top:995px;" width="18" height="18" viewBox="0 0 18 18"><circle cx="7.400" cy="7.400" r="5.600" fill="none" stroke="#888" stroke-width="1"/><path d="M11.400 11.600l4.200 4.200M4.800 7.400h5.200M7.400 4.800v5.200" stroke="#888" stroke-width="1"/></svg>
<span class="t" style="left:1467px;top:994.0px;font-size:15px;line-height:21px;color:#888;">已选中:</span>
<span class="t" style="left:1526px;top:994.0px;font-size:15px;line-height:21px;color:#888;letter-spacing:.4px;">datePick1</span>
<span class="t" style="left:1619px;top:993.0px;font-size:15px;line-height:21px;color:#888;">刷新</span>
<svg style="left:1653px;top:995px;" width="18" height="18" viewBox="0 0 18 18"><path d="M14.600 7A6 6 0 0 0 3.400 6.600M3.400 11a6 6 0 0 0 11.200.400" fill="none" stroke="#888" stroke-width="1.500"/><path d="M15.800 3.400v4.200h-4.200zM2.200 14.600v-4.200h4.200z" fill="#888"/></svg>
<div style="left:1690px;top:995px;width:1px;height:18px;background:#e0e0e0;"></div>
<span class="t" style="left:1704px;top:993.0px;font-size:15px;line-height:21px;color:#888;">实时渲染:</span>
<div style="left:1773px;top:995px;width:37px;height:19px;background:#3167fb;border-radius:10px;"></div>
<div style="left:1792.5px;top:997px;width:15px;height:15px;background:#fff;border-radius:50%;"></div>
<div style="left:1818px;top:995px;width:1px;height:18px;background:#e0e0e0;"></div>
<span class="t" style="left:1831px;top:994.0px;font-size:15px;line-height:21px;color:#888;">组件数量:</span>
<span class="t" style="left:1905px;top:994.0px;font-size:15px;line-height:21px;color:#888;">2</span>
<div class="sh" style="left:1414px;top:216px;width:192px;height:129px;border-radius:2px;box-shadow:0 1px 9px rgba(0,0,0,.3);"></div>
<div style="left:1414px;top:259px;width:191px;height:43px;background:#f5f7fa;"></div>
<span class="t" style="left:1435px;top:228.0px;font-size:15px;line-height:21px;color:#666;letter-spacing:.25px;">动态时间+时间范围</span>
<span class="t" style="left:1435px;top:269.5px;font-size:15px;line-height:21px;color:#3167fb;font-weight:700;">时间范围</span>
<span class="t" style="left:1435px;top:313.0px;font-size:15px;line-height:21px;color:#666;">动态时间</span>
<div class="sh" style="left:1764px;top:373px;width:139px;height:155.5px;border-radius:3px;"></div>
<div style="left:1765px;top:496px;width:137px;height:32px;background:#f5f7fa;"></div>
<span class="t" style="left:1777px;top:383.25px;font-size:14.5px;line-height:20.5px;color:#666;">年</span>
<span class="t" style="left:1777px;top:424.55px;font-size:14.5px;line-height:20.5px;color:#666;">年月</span>
<span class="t" style="left:1777px;top:465.75px;font-size:14.5px;line-height:20.5px;color:#666;">年月日</span>
<span class="t" style="left:1777px;top:506.54999999999995px;font-size:14.5px;line-height:20.5px;color:#3167fb;font-weight:700;">年月日 时分秒</span>
<div class="sh" style="left:996px;top:489px;width:609px;height:258px;"></div>
<span class="t" style="left:1000px;top:500.0px;font-size:15px;line-height:21px;color:#555;">联动配置</span>
<svg style="left:1570px;top:506px;" width="10" height="10" viewBox="0 0 10 10"><path d="M1.800 1.800l6 6M7.800 1.800l-6 6" stroke="#777" stroke-width="1"/></svg>
<span class="t" style="left:1017.3px;top:542.35px;font-size:16.3px;line-height:22.3px;color:#555;">联动组</span>
<div class="inp" style="left:1081px;top:539px;width:350px;height:30px;"></div>
<span class="t" style="left:1090px;top:544.0px;font-size:15px;line-height:21px;color:#555;">默认组</span>
<div style="left:1444px;top:545px;width:15px;height:15px;background:#3167fb;border-radius:2px;"></div>
<svg style="left:1444px;top:545px;" width="15" height="15" viewBox="0 0 15 15"><path d="M3.600 7.600l2.800 2.800 5-5.400" fill="none" stroke="#fff" stroke-width="1.400"/></svg>
<span class="t" style="left:1469px;top:541.8px;font-size:15px;line-height:21px;color:#3167fb;">联动覆盖相同字段</span>
<span class="t" style="left:1001px;top:596.35px;font-size:16.3px;line-height:22.3px;color:#555;">数据类型</span>
<div style="left:1081px;top:594px;width:73px;height:30px;background:#f5f7fa;border-radius:4px;"></div>
<span class="t" style="left:1081.0px;top:598.0px;width:73px;text-align:center;font-size:15px;line-height:21px;color:#3167fb;">数据集</span>
<div style="left:1169px;top:594px;width:87px;height:30px;background:#f5f7fa;border-radius:4px;"></div>
<span class="t" style="left:1169.0px;top:598.0px;width:87px;text-align:center;font-size:15px;line-height:21px;color:#8a8a8a;">历史数据</span>
<div style="left:1015px;top:638.5px;width:586px;height:98px;border:2px solid #e60012;"></div>
<span class="t" style="left:1017.3px;top:650.35px;font-size:16.3px;line-height:22.3px;color:#555;">数据集</span>
<div class="inp" style="left:1081px;top:646.2px;width:512px;height:29.3px;"></div>
<span class="t" style="left:1091px;top:651.0px;font-size:15px;line-height:21px;color:#555;">能流图</span>
<svg style="left:1567px;top:656.5px;" width="14" height="10" viewBox="0 0 14 10"><path d="M1.500 2.500L7.0 8l5.5-5.500" fill="none" stroke="#999" stroke-width="1.100"/></svg>
<span class="t" style="left:1033.6px;top:703.35px;font-size:16.3px;line-height:22.3px;color:#555;">维度</span>
<div class="inp" style="left:1081px;top:699px;width:512px;height:29.3px;"></div>
<span class="t" style="left:1091px;top:704.0px;font-size:15px;line-height:21px;color:#555;">日期</span>
<svg style="left:1567px;top:709.5px;" width="14" height="10" viewBox="0 0 14 10"><path d="M1.500 2.500L7.0 8l5.5-5.500" fill="none" stroke="#999" stroke-width="1.100"/></svg>
<div class="sh" style="left:1353px;top:751px;width:254px;height:231px;"></div>
<span class="t" style="left:1366px;top:757.5px;font-size:16px;line-height:22px;color:#6a6a6a;">添加动态组件</span>
<svg style="left:1584px;top:763.5px;" width="10" height="10" viewBox="0 0 10 10"><path d="M2 2l5.600 5.600M7.600 2L2 7.600" stroke="#777" stroke-width="1"/></svg>
<div style="left:1353px;top:793px;width:254px;height:1px;background:#e8e8e8;"></div>
<div style="left:1353px;top:797px;width:236px;height:27px;border:1px solid #e4e7ed;border-left:none;"></div>
<div style="left:1429px;top:797px;width:1px;height:27px;background:#e4e7ed;"></div>
<div style="left:1508px;top:797px;width:1px;height:27px;background:#e4e7ed;"></div>
<span class="t" style="left:1351.0px;top:801.25px;width:76px;text-align:center;font-size:13.5px;line-height:19.5px;color:#555;">变量事件</span>
<span class="t" style="left:1429.5px;top:801.25px;width:78px;text-align:center;font-size:13.5px;line-height:19.5px;color:#555;">动画系统</span>
<span class="t" style="left:1509.0px;top:801.25px;width:78px;text-align:center;font-size:13.5px;line-height:19.5px;color:#555;">界面事件</span>
<div style="left:1353px;top:833px;width:75px;height:27px;border:1px solid #e4e7ed;border-left:none;border-right:none;"></div>
<span class="t" style="left:1350.0px;top:836.25px;width:76px;text-align:center;font-size:13.5px;line-height:19.5px;color:#555;">界面行为</span>
<div style="left:1427.5px;top:833px;width:80.5px;height:26.5px;background:#3167fb;border-radius:0 4px 4px 0;"></div>
<span class="t" style="left:1427.5px;top:836.25px;width:80px;text-align:center;font-size:13.5px;line-height:19.5px;color:#fff;">数据联动</span>
<svg style="left:1379px;top:877px;" width="16" height="16" viewBox="0 0 16 16"><path d="M8 1.200l6 3.200v7.200l-6 3.200-6-3.200V4.400z" fill="none" stroke="#666" stroke-width="1.100" stroke-linejoin="round"/><path d="M2.200 4.600L8 7.800l5.800-3.200M8 7.800v6.800" fill="none" stroke="#666" stroke-width="1.100"/></svg>
<span class="t" style="left:1400px;top:875.75px;font-size:13.5px;line-height:19.5px;color:#666;">清除联动</span>
<div style="left:1353px;top:902px;width:254px;height:1px;background:#efefef;"></div>
<svg style="left:1379px;top:912px;" width="16" height="16" viewBox="0 0 16 16"><path d="M8 1.200l6 3.200v7.200l-6 3.200-6-3.200V4.400z" fill="none" stroke="#999" stroke-width="1.100" stroke-linejoin="round"/><path d="M2.200 4.600L8 7.800l5.800-3.200M8 7.800v6.800" fill="none" stroke="#999" stroke-width="1.100"/></svg>
<span class="t" style="left:1400px;top:910.75px;font-size:13.5px;line-height:19.5px;color:#999;">事件联动</span>
<div style="left:1353px;top:937px;width:254px;height:1px;background:#efefef;"></div>
<svg style="left:1379px;top:947px;" width="16" height="16" viewBox="0 0 16 16"><path d="M8 1.200l6 3.200v7.200l-6 3.200-6-3.200V4.400z" fill="none" stroke="#555" stroke-width="1.100" stroke-linejoin="round"/><path d="M2.200 4.600L8 7.800l5.800-3.200M8 7.800v6.800" fill="none" stroke="#555" stroke-width="1.100"/></svg>
<span class="t" style="left:1400px;top:945.75px;font-size:13.5px;line-height:19.5px;color:#555;">过滤联动</span>
<div style="left:1373.5px;top:939px;width:100px;height:33.5px;border:2px solid #e60012;"></div>
<div style="left:1353px;top:973px;width:254px;height:1px;background:#f0f0f0;"></div>
<svg style="left:0;top:0;pointer-events:none;" width="1920" height="1020" viewBox="0 0 1920 1020"><path d="M83 253L380.1 253.0" stroke="#e60012" stroke-width="1.8" fill="none"/><path d="M386 253L377.5 256.3L379.9 253.0L377.5 249.7z" fill="#e60012"/><path d="M1757 239L1580.0 239.0" stroke="#e60012" stroke-width="1.8" fill="none"/><path d="M1574 239L1582.5 235.7L1580.1 239.0L1582.5 242.3z" fill="#e60012"/><path d="M1839 364L1839.0 392.4" stroke="#e60012" stroke-width="1.8" fill="none"/><path d="M1839 398L1836.0 390.0L1839.0 392.2L1842.0 390.0z" fill="#e60012"/><path d="M1714 788L1593.0 788.0" stroke="#e60012" stroke-width="1.8" fill="none"/><path d="M1587 788L1595.5 784.7L1593.1 788.0L1595.5 791.3z" fill="#e60012"/><path d="M1784 741L1588.9 518.5" stroke="#e60012" stroke-width="1.8" fill="none"/><path d="M1585 514L1593.1 518.2L1589.0 518.6L1588.1 522.6z" fill="#e60012"/></svg>
<span class="t" style="left:270px;top:223.75px;font-size:18.5px;line-height:24.5px;color:#e60012;">1</span>
<span class="t" style="left:1586.5px;top:205.45px;font-size:17.5px;line-height:23.5px;color:#e60012;">2：选择时间类型</span>
<span class="t" style="left:1811.5px;top:366.25px;font-size:18.5px;line-height:24.5px;color:#e60012;">3</span>
<span class="t" style="left:1636.5px;top:757.75px;font-size:18.5px;line-height:24.5px;color:#e60012;">4</span>
<span class="t" style="left:1727.5px;top:640.75px;font-size:18.5px;line-height:24.5px;color:#e60012;">5</span>
</body></html>
